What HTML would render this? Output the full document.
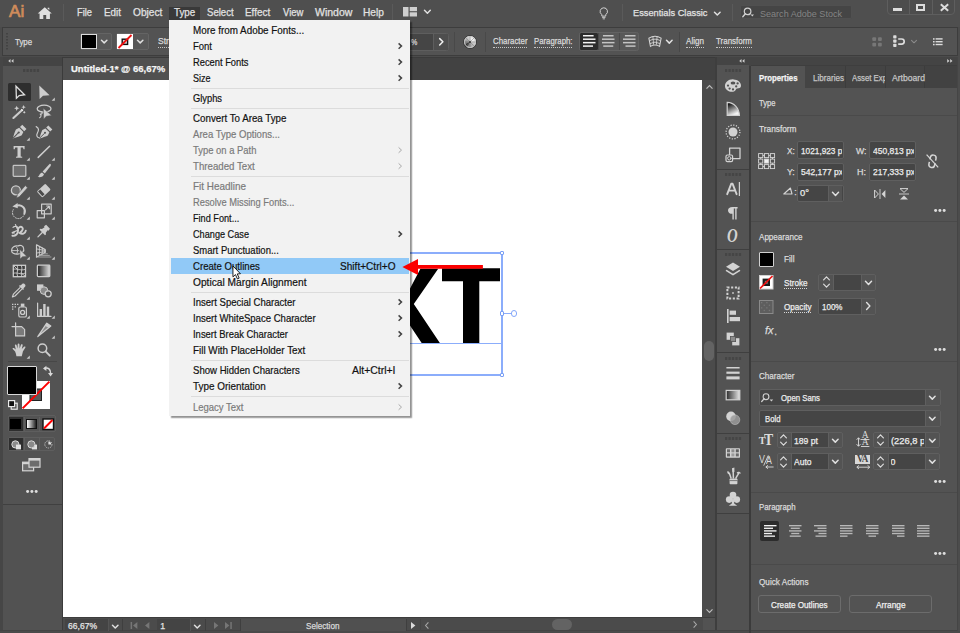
<!DOCTYPE html>
<html><head><meta charset="utf-8"><title>Adobe Illustrator</title>
<style>
html,body{margin:0;padding:0;}
body{width:960px;height:633px;overflow:hidden;background:#4f4f4f;position:relative;font-family:"Liberation Sans",sans-serif;}
.t{position:absolute;white-space:nowrap;transform-origin:0 50%;display:block;}
.r{position:absolute;display:block;}
svg{overflow:visible;}
</style></head>
<body>
<div class="r" style="left:0.00px;top:0.00px;width:960.00px;height:27.00px;background:#4f4f4f;"></div>
<div class="r" style="left:0.00px;top:27.00px;width:960.00px;height:30.00px;background:#4b4b4b;"></div>
<div class="r" style="left:2.30px;top:26.80px;width:955.60px;height:29.40px;background:#3d3d3d;"></div>
<div class="r" style="left:3.20px;top:27.80px;width:953.80px;height:27.40px;background:#535353;"></div>
<div class="r" style="left:0.00px;top:57.00px;width:63.00px;height:576.00px;background:#464646;"></div>
<div class="r" style="left:2.70px;top:57.00px;width:59.30px;height:9.00px;background:#444444;"></div>
<div class="r" style="left:2.70px;top:66.00px;width:59.30px;height:438.00px;background:#535353;"></div>
<div class="r" style="left:2.70px;top:504.00px;width:59.30px;height:129.00px;background:#525252;"></div>
<div class="r" style="left:62.00px;top:57.00px;width:1.00px;height:576.00px;background:#3b3b3b;"></div>
<div class="r" style="left:2.70px;top:503.50px;width:59.30px;height:1.00px;background:#404040;"></div>
<div class="r" style="left:63.00px;top:57.00px;width:653.50px;height:22.80px;background:#424242;"></div>
<div class="r" style="left:63.00px;top:57.00px;width:200.00px;height:22.80px;background:#505050;"></div>
<div class="r" style="left:63.00px;top:56.50px;width:653.50px;height:1.00px;background:#3b3b3b;"></div>
<div class="r" style="left:63.00px;top:79.80px;width:639.40px;height:537.50px;background:#ffffff;"></div>
<div class="r" style="left:702.40px;top:79.80px;width:12.50px;height:538.00px;background:#4b4b4b;"></div>
<div class="r" style="left:63.00px;top:617.20px;width:653.50px;height:15.50px;background:#4b4b4b;"></div>
<div class="r" style="left:63.00px;top:617.20px;width:653.50px;height:1.00px;background:#3d3d3d;"></div>
<div class="r" style="left:714.90px;top:57.00px;width:245.10px;height:576.00px;background:#3e3e3e;"></div>
<div class="r" style="left:716.50px;top:57.00px;width:243.50px;height:8.40px;background:#444444;"></div>
<div class="r" style="left:716.50px;top:65.40px;width:32.00px;height:448.60px;background:#535353;"></div>
<div class="r" style="left:716.50px;top:514.00px;width:32.00px;height:119.00px;background:#525252;"></div>
<div class="r" style="left:750.50px;top:66.00px;width:206.70px;height:567.00px;background:#535353;"></div>
<div class="r" style="left:0.00px;top:630.30px;width:960.00px;height:2.70px;background:#4a4a4a;"></div>
<div class="r" style="left:0.00px;top:630.30px;width:960.00px;height:0.80px;background:#434343;"></div>
<div class="r" style="left:957.20px;top:57.00px;width:1.00px;height:574.00px;background:#454545;"></div>
<div class="r" style="left:958.20px;top:28.00px;width:1.80px;height:603.00px;background:#4c4c4c;"></div>
<span class="t" style="left:9.40px;top:1.00px;height:22px;line-height:22px;font-size:17px;color:#d08c5b;font-family:'Liberation Sans', sans-serif;transform:scaleX(1.0050);-webkit-text-stroke:0.7px #d08c5b;">Ai</span>
<svg class="r" style="left:37.00px;top:5.60px;" width="15.5" height="14" viewBox="0 0 18 16"><path d="M9 1.2 L0.8 8.6 L3 8.6 L3 15 L7.3 15 L7.3 10.2 L10.7 10.2 L10.7 15 L15 15 L15 8.6 L17.2 8.6 Z M12.3 2 L14.3 2 L14.3 4.6 L12.3 2.9 Z" fill="#e0e0e0"/></svg>
<div class="r" style="left:62.50px;top:4.00px;width:1.00px;height:17.00px;background:#5a5a5a;"></div>
<div class="r" style="left:169.30px;top:7.00px;width:30.60px;height:12.70px;background:#393939;"></div>
<span class="t" style="left:76.70px;top:5.70px;height:13px;line-height:13px;font-size:10.3px;color:#e2e2e2;font-family:'Liberation Sans', sans-serif;transform:scaleX(0.9040);-webkit-text-stroke:0.25px #e2e2e2;">File</span>
<span class="t" style="left:103.80px;top:5.70px;height:13px;line-height:13px;font-size:10.3px;color:#e2e2e2;font-family:'Liberation Sans', sans-serif;transform:scaleX(0.9577);-webkit-text-stroke:0.25px #e2e2e2;">Edit</span>
<span class="t" style="left:132.70px;top:5.70px;height:13px;line-height:13px;font-size:10.3px;color:#e2e2e2;font-family:'Liberation Sans', sans-serif;transform:scaleX(0.9844);-webkit-text-stroke:0.25px #e2e2e2;">Object</span>
<span class="t" style="left:174.00px;top:5.70px;height:13px;line-height:13px;font-size:10.3px;color:#e2e2e2;font-family:'Liberation Sans', sans-serif;transform:scaleX(0.9495);-webkit-text-stroke:0.25px #e2e2e2;">Type</span>
<span class="t" style="left:206.60px;top:5.70px;height:13px;line-height:13px;font-size:10.3px;color:#e2e2e2;font-family:'Liberation Sans', sans-serif;transform:scaleX(0.9293);-webkit-text-stroke:0.25px #e2e2e2;">Select</span>
<span class="t" style="left:245.40px;top:5.70px;height:13px;line-height:13px;font-size:10.3px;color:#e2e2e2;font-family:'Liberation Sans', sans-serif;transform:scaleX(0.9640);-webkit-text-stroke:0.25px #e2e2e2;">Effect</span>
<span class="t" style="left:282.50px;top:5.70px;height:13px;line-height:13px;font-size:10.3px;color:#e2e2e2;font-family:'Liberation Sans', sans-serif;transform:scaleX(0.9169);-webkit-text-stroke:0.25px #e2e2e2;">View</span>
<span class="t" style="left:314.50px;top:5.70px;height:13px;line-height:13px;font-size:10.3px;color:#e2e2e2;font-family:'Liberation Sans', sans-serif;transform:scaleX(1.0212);-webkit-text-stroke:0.25px #e2e2e2;">Window</span>
<span class="t" style="left:362.70px;top:5.70px;height:13px;line-height:13px;font-size:10.3px;color:#e2e2e2;font-family:'Liberation Sans', sans-serif;transform:scaleX(0.9864);-webkit-text-stroke:0.25px #e2e2e2;">Help</span>
<div class="r" style="left:392.00px;top:4.00px;width:1.00px;height:17.00px;background:#5a5a5a;"></div>
<svg class="r" style="left:403.30px;top:6.80px;" width="14" height="9.4" viewBox="0 0 14 9.4"><rect x="0" y="0" width="5.5" height="9.5" fill="#cfcfcf"/><rect x="6.7" y="0" width="7.3" height="4.2" fill="#cfcfcf"/><rect x="6.7" y="5.3" width="7.3" height="4.2" fill="#cfcfcf"/></svg>
<svg class="r" style="left:424.20px;top:10.20px;" width="6.8" height="3.6" viewBox="0 0 6.8 3.6"><path d="M0.5 0.3 L3.4 3.2 L6.3 0.3" fill="none" stroke="#e0e0e0" stroke-width="1.5" stroke-linecap="round" stroke-linejoin="round"/></svg>
<svg class="r" style="left:599.20px;top:6.50px;" width="9.6" height="13.2" viewBox="0 0 12 16.5"><path d="M6 1 A4.6 4.6 0 0 1 8.6 9.4 L8.4 11.4 L3.6 11.4 L3.4 9.4 A4.6 4.6 0 0 1 6 1 Z" fill="none" stroke="#d8d8d8" stroke-width="1.2"/><path d="M3.9 13 L8.1 13 M4.6 14.8 L7.4 14.8" stroke="#d8d8d8" stroke-width="1.1"/></svg>
<div class="r" style="left:622.30px;top:4.00px;width:1.00px;height:17.00px;background:#5a5a5a;"></div>
<span class="t" style="left:632.50px;top:5.90px;height:13px;line-height:13px;font-size:9.7px;color:#e2e2e2;font-family:'Liberation Sans', sans-serif;transform:scaleX(0.9542);-webkit-text-stroke:0.25px #e2e2e2;">Essentials Classic</span>
<svg class="r" style="left:714.00px;top:12.20px;" width="6.6" height="3.4" viewBox="0 0 6.6 3.4"><path d="M0.5 0.3 L3.3 3.0 L6.1 0.3" fill="none" stroke="#e0e0e0" stroke-width="1.5" stroke-linecap="round" stroke-linejoin="round"/></svg>
<div class="r" style="left:731.50px;top:4.00px;width:1.00px;height:17.00px;background:#5a5a5a;"></div>
<div class="r" style="left:739.50px;top:4.50px;width:112.00px;height:14.00px;background:#454545;border:1px solid #505050;box-sizing:border-box;border-radius:2px;"></div>
<svg class="r" style="left:742.20px;top:7.40px;" width="13" height="11" viewBox="0 0 13 11"><circle cx="5.6" cy="4.4" r="3.3" fill="none" stroke="#d0d0d0" stroke-width="1.2"/><path d="M3.4 6.8 L0.8 9.8" stroke="#d0d0d0" stroke-width="1.4" stroke-linecap="round"/><path d="M8.6 7.6 L12 7.6 L10.3 9.6 Z" fill="#d0d0d0"/></svg>
<span class="t" style="left:760.30px;top:7.50px;height:12px;line-height:12px;font-size:9.4px;color:#848484;font-family:'Liberation Sans', sans-serif;transform:scaleX(0.9652);">Search Adobe Stock</span>
<div class="r" style="left:886.5px;top:-2px;width:68.5px;height:17px;border:1px solid #5e5e5e;border-radius:0 0 4px 4px;box-sizing:border-box;background:#4d4d4d"></div>
<div class="r" style="left:909.30px;top:0.00px;width:1.00px;height:14.00px;background:#5e5e5e;"></div>
<div class="r" style="left:931.50px;top:0.00px;width:1.00px;height:14.00px;background:#5e5e5e;"></div>
<div class="r" style="left:893.00px;top:7.80px;width:9.20px;height:3.00px;background:#dcdcdc;"></div>
<div class="r" style="left:916.00px;top:4.00px;width:9.00px;height:6.80px;border:2px solid #dcdcdc;box-sizing:border-box;border-top-width:2.4px;"></div>
<svg class="r" style="left:939.50px;top:3.80px;" width="9" height="7" viewBox="0 0 9 7"><path d="M0.8 0.3 L8.2 6.7 M8.2 0.3 L0.8 6.7" stroke="#dcdcdc" stroke-width="2"/></svg>
<svg class="r" style="left:5.50px;top:33.00px;" width="3" height="18" viewBox="0 0 3 18"><path d="M1 0 V18" stroke="#3e3e3e" stroke-width="1.4" stroke-dasharray="1.5 1.5"/></svg>
<span class="t" style="left:15.00px;top:37.10px;height:11px;line-height:11px;font-size:8.8px;color:#dadada;font-family:'Liberation Sans', sans-serif;transform:scaleX(0.9016);-webkit-text-stroke:0.25px #dadada;">Type</span>
<div class="r" style="left:79.70px;top:33.00px;width:32.00px;height:17.20px;background:#585858;border:1px solid #646464;box-sizing:border-box;border-radius:2px;"></div>
<div class="r" style="left:80.60px;top:33.90px;width:16.00px;height:15.50px;background:#000;border:1px solid #dcdcdc;box-sizing:border-box;"></div>
<svg class="r" style="left:101.00px;top:40.40px;" width="6.4" height="3.3" viewBox="0 0 6.4 3.3"><path d="M0.5 0.3 L3.2 2.9 L5.9 0.3" fill="none" stroke="#e0e0e0" stroke-width="1.5" stroke-linecap="round" stroke-linejoin="round"/></svg>
<div class="r" style="left:116.00px;top:33.00px;width:32.50px;height:17.20px;background:#585858;border:1px solid #646464;box-sizing:border-box;border-radius:2px;"></div>
<svg class="r" style="left:116.90px;top:33.90px;" width="16" height="15.5" viewBox="0 0 16 15.5"><rect x="0" y="0" width="16" height="15" fill="#fff"/><rect x="5.2" y="5.2" width="5.4" height="5.2" fill="#d8d8d8" stroke="#111" stroke-width="1.4"/><path d="M1.5 14 L14.5 1" stroke="#f01010" stroke-width="1.8"/></svg>
<svg class="r" style="left:137.00px;top:40.40px;" width="6.4" height="3.3" viewBox="0 0 6.4 3.3"><path d="M0.5 0.3 L3.2 2.9 L5.9 0.3" fill="none" stroke="#e0e0e0" stroke-width="1.5" stroke-linecap="round" stroke-linejoin="round"/></svg>
<span class="t" style="left:158.00px;top:36.20px;height:11px;line-height:11px;font-size:8.8px;color:#dadada;font-family:'Liberation Sans', sans-serif;transform:scaleX(0.9686);-webkit-text-stroke:0.25px #dadada;">Stroke:</span>
<div style="position:absolute;left:158.00px;top:46.60px;width:27.00px;height:0;border-top:1px dotted #dadada;opacity:.85"></div>
<div class="r" style="left:380.00px;top:33.00px;width:69.40px;height:17.60px;background:#454545;border:1px solid #5e5e5e;box-sizing:border-box;border-radius:2.5px;"></div>
<div class="r" style="left:434.20px;top:34.00px;width:14.20px;height:15.60px;background:#4e4e4e;"></div>
<div class="r" style="left:433.20px;top:34.00px;width:1.00px;height:15.60px;background:#5e5e5e;"></div>
<span class="t" style="left:410.60px;top:36.80px;height:11px;line-height:11px;font-size:8.8px;color:#dadada;font-family:'Liberation Sans', sans-serif;transform:scaleX(0.8048);-webkit-text-stroke:0.25px #dadada;">%</span>
<svg class="r" style="left:438.80px;top:38.20px;" width="4.6" height="7.6" viewBox="0 0 4.6 7.6"><path d="M0.7 0.6 L3.9 3.8 L0.7 7" fill="none" stroke="#f0f0f0" stroke-width="1.5" stroke-linecap="round" stroke-linejoin="round"/></svg>
<div class="r" style="left:454.20px;top:31.50px;width:1.00px;height:20.50px;background:#494949;"></div>
<div class="r" style="left:463px;top:34.5px;width:14px;height:14px;border-radius:50%;box-sizing:border-box;border:1px solid #3a3a3a;background:conic-gradient(from 0deg,#e0e0e0,#f6f6f6 50deg,#c8c8c8 110deg,#a4a4a4 170deg,#8c8c8c 200deg,#1c1c1c 228deg,#7c7c7c 256deg,#a8a8a8 300deg,#e0e0e0)"></div>
<div class="r" style="left:464px;top:35.5px;width:12px;height:12px;border-radius:50%;box-sizing:border-box;border:1.2px solid #cfcfcf"></div>
<svg class="r" style="left:463.00px;top:34.50px;" width="14" height="14" viewBox="0 0 14 14"><path d="M7 1.4 V12.6 M1.4 7 H12.6 M3 3 L11 11 M11 3 L3 11" stroke="#777" stroke-width="0.7" opacity=".7"/><circle cx="7" cy="7" r="1" fill="#333"/></svg>
<div class="r" style="left:485.00px;top:31.50px;width:1.00px;height:20.50px;background:#494949;"></div>
<span class="t" style="left:492.50px;top:36.20px;height:11px;line-height:11px;font-size:8.8px;color:#dadada;font-family:'Liberation Sans', sans-serif;transform:scaleX(0.8932);-webkit-text-stroke:0.25px #dadada;">Character</span>
<div style="position:absolute;left:492.50px;top:46.60px;width:34.50px;height:0;border-top:1px dotted #dadada;opacity:.85"></div>
<span class="t" style="left:533.70px;top:36.20px;height:11px;line-height:11px;font-size:8.8px;color:#dadada;font-family:'Liberation Sans', sans-serif;transform:scaleX(0.8844);-webkit-text-stroke:0.25px #dadada;">Paragraph:</span>
<div style="position:absolute;left:533.70px;top:46.60px;width:38.50px;height:0;border-top:1px dotted #dadada;opacity:.85"></div>
<div class="r" style="left:578.60px;top:31.80px;width:60.40px;height:19.40px;background:#585858;border:1px solid #626262;box-sizing:border-box;border-radius:2.5px;"></div>
<div class="r" style="left:579.60px;top:32.80px;width:18.30px;height:17.40px;background:#2c2c2c;border-radius:1.5px;"></div>
<div class="r" style="left:598.40px;top:32.80px;width:1.00px;height:17.40px;background:#4a4a4a;"></div>
<div class="r" style="left:618.60px;top:32.80px;width:1.00px;height:17.40px;background:#4a4a4a;"></div>
<svg class="r" style="left:582.50px;top:35.40px;" width="12.5" height="13.8" viewBox="0 0 12.5 13.8"><rect x="0.00" y="0.00" width="10.6" height="1.5" fill="#f4f4f4"/><rect x="0.00" y="3.45" width="12.5" height="1.5" fill="#f4f4f4"/><rect x="0.00" y="6.90" width="12.5" height="1.5" fill="#f4f4f4"/><rect x="0.00" y="10.35" width="10" height="1.5" fill="#f4f4f4"/></svg>
<svg class="r" style="left:602.40px;top:35.40px;" width="12.5" height="13.8" viewBox="0 0 12.5 13.8"><rect x="0.95" y="0.00" width="10.6" height="1.5" fill="#c4c4c4"/><rect x="0.00" y="3.45" width="12.5" height="1.5" fill="#c4c4c4"/><rect x="0.00" y="6.90" width="12.5" height="1.5" fill="#c4c4c4"/><rect x="1.25" y="10.35" width="10" height="1.5" fill="#c4c4c4"/></svg>
<svg class="r" style="left:622.70px;top:35.40px;" width="12.5" height="13.8" viewBox="0 0 12.5 13.8"><rect x="1.90" y="0.00" width="10.6" height="1.5" fill="#c4c4c4"/><rect x="0.00" y="3.45" width="12.5" height="1.5" fill="#c4c4c4"/><rect x="0.00" y="6.90" width="12.5" height="1.5" fill="#c4c4c4"/><rect x="2.50" y="10.35" width="10" height="1.5" fill="#c4c4c4"/></svg>
<svg class="r" style="left:647.50px;top:34.60px;" width="14" height="13" viewBox="0 0 16 14"><path d="M1 3.2 Q8 -1.4 15 3.2 L13.2 12.6 Q8 9.6 2.8 12.6 Z" fill="none" stroke="#d4d4d4" stroke-width="1.2"/><path d="M5.6 1.4 L6.4 10.6 M10.4 1.4 L9.6 10.6 M1.6 6.2 Q8 2.4 14.4 6.2 M2.2 9.4 Q8 6 13.8 9.4" fill="none" stroke="#d4d4d4" stroke-width="1"/></svg>
<svg class="r" style="left:666.40px;top:39.60px;" width="6.6" height="3.5" viewBox="0 0 6.6 3.5"><path d="M0.5 0.3 L3.3 3.1 L6.1 0.3" fill="none" stroke="#e0e0e0" stroke-width="1.5" stroke-linecap="round" stroke-linejoin="round"/></svg>
<div class="r" style="left:678.80px;top:32.00px;width:1.00px;height:20.00px;background:#474747;"></div>
<span class="t" style="left:685.80px;top:36.20px;height:11px;line-height:11px;font-size:8.8px;color:#dadada;font-family:'Liberation Sans', sans-serif;transform:scaleX(0.9201);-webkit-text-stroke:0.25px #dadada;">Align</span>
<div style="position:absolute;left:685.80px;top:46.60px;width:18.00px;height:0;border-top:1px dotted #dadada;opacity:.85"></div>
<span class="t" style="left:715.80px;top:36.20px;height:11px;line-height:11px;font-size:8.8px;color:#dadada;font-family:'Liberation Sans', sans-serif;transform:scaleX(0.9053);-webkit-text-stroke:0.25px #dadada;">Transform</span>
<div style="position:absolute;left:715.80px;top:46.60px;width:36.00px;height:0;border-top:1px dotted #dadada;opacity:.85"></div>
<svg class="r" style="left:872.00px;top:36.50px;" width="10.5" height="10" viewBox="0 0 10.5 10"><rect x="0.3" y="0.2" width="3.8" height="3.8" rx="1" fill="#777"/><rect x="0.3" y="5.8" width="3.8" height="3.8" rx="1" fill="#777"/><rect x="6" y="0.2" width="3.8" height="3.8" rx="1" fill="#777"/><rect x="6" y="5.8" width="3.8" height="3.8" rx="1" fill="#777"/></svg>
<svg class="r" style="left:893.00px;top:35.00px;" width="13" height="12.5" viewBox="0 0 13 12.5"><rect x="0.2" y="0.2" width="3.3" height="3.3" rx="0.8" fill="#dcdcdc"/><rect x="0.2" y="4.5" width="3.3" height="3.3" rx="0.8" fill="#dcdcdc"/><rect x="0.2" y="8.8" width="3.3" height="3.3" rx="0.8" fill="#dcdcdc"/><path d="M5.2 4 H8.6 A2.6 2.6 0 0 1 8.6 9.2 H5.2" fill="none" stroke="#dcdcdc" stroke-width="1.7"/></svg>
<svg class="r" style="left:911.00px;top:40.30px;" width="6" height="3.2" viewBox="0 0 6 3.2"><path d="M0.5 0.3 L3.0 2.8000000000000003 L5.5 0.3" fill="none" stroke="#8a8a8a" stroke-width="1.1" stroke-linecap="round" stroke-linejoin="round"/></svg>
<svg class="r" style="left:933.30px;top:38.00px;" width="10" height="8" viewBox="0 0 10 8"><rect x="0" y="0.2" width="1.6" height="1.5" fill="#dcdcdc"/><rect x="2.6" y="0.2" width="7" height="1.4" fill="#dcdcdc"/><rect x="0" y="3" width="1.6" height="1.5" fill="#dcdcdc"/><rect x="2.6" y="3" width="7" height="1.4" fill="#dcdcdc"/><rect x="0" y="5.8" width="1.6" height="1.5" fill="#dcdcdc"/><rect x="2.6" y="5.8" width="7" height="1.4" fill="#dcdcdc"/></svg>
<svg class="r" style="left:7.70px;top:58.80px;" width="5.7" height="4" viewBox="0 0 5.7 4"><path d="M2.5 0.1 L0.2 1.9 L2.5 3.7 Z M5.5 0.1 L3.2 1.9 L5.5 3.7 Z" fill="#d0d0d0"/></svg>
<svg class="r" style="left:23.30px;top:69.00px;" width="17.25" height="3" viewBox="0 0 17.25 3"><rect x="0.00" y="0" width="2.3" height="3" fill="#444444"/><rect x="3.45" y="0" width="2.3" height="3" fill="#444444"/><rect x="6.90" y="0" width="2.3" height="3" fill="#444444"/><rect x="10.35" y="0" width="2.3" height="3" fill="#444444"/><rect x="13.80" y="0" width="2.3" height="3" fill="#444444"/></svg>
<div class="r" style="left:8.00px;top:83.00px;width:22.50px;height:18.00px;background:#2e2e2e;border-radius:1.5px;"></div>
<svg class="r" style="left:9.00px;top:82.00px;" width="20" height="20" viewBox="0 0 20 20"><path d="M7 4.2 L7.4 16.2 L10.2 13.6 L15.6 12.7 Z" fill="none" stroke="#dedede" stroke-width="1.3" stroke-linejoin="miter"/></svg>
<svg class="r" style="left:34.30px;top:82.00px;" width="20" height="20" viewBox="0 0 20 20"><path d="M5.3 3.4 L5.6 17 L9 13.8 L15.6 13.2 Z" fill="#cdcdcd"/><path d="M20.8 15.6 L20.8 18.8 L17.6 18.8 Z" fill="#c8c8c8"/></svg>
<svg class="r" style="left:9.00px;top:101.85px;" width="20" height="20" viewBox="0 0 20 20"><path d="M4.4 16 L12.6 8.4" fill="none" stroke="#cdcdcd" stroke-linecap="round" stroke-linejoin="round" stroke-width="2.1" stroke-linecap="butt"/><path d="M12.6 8.4 L13.6 7.5" stroke="#f0f0f0" stroke-width="2.1"/><path d="M7.70 3.70 L8.47 5.53 L10.30 6.30 L8.47 7.07 L7.70 8.90 L6.93 7.07 L5.10 6.30 L6.93 5.53 Z" fill="#cdcdcd"/><path d="M14.60 3.00 L15.25 4.55 L16.80 5.20 L15.25 5.85 L14.60 7.40 L13.95 5.85 L12.40 5.20 L13.95 4.55 Z" fill="#cdcdcd"/><path d="M15.30 9.00 L15.94 9.66 L16.60 10.30 L15.94 10.94 L15.30 11.60 L14.66 10.94 L14.00 10.30 L14.66 9.66 Z" fill="#cdcdcd"/></svg>
<svg class="r" style="left:34.30px;top:101.85px;" width="20" height="20" viewBox="0 0 20 20"><ellipse cx="10.1" cy="6.7" rx="6.9" ry="3.5" fill="none" stroke="#cdcdcd" stroke-linecap="round" stroke-linejoin="round" stroke-width="1.3"/><path d="M6.6 9.6 a1.3 1.3 0 1 1 -0.4 2.4 c1.4 1 1 3 -0.6 3.8" fill="none" stroke="#cdcdcd" stroke-linecap="round" stroke-linejoin="round" stroke-width="1.1"/><path d="M9.3 6.2 L9.7 17.2 L12.3 14.2 L17.6 13.6 Z" fill="#cdcdcd" stroke="#535353" stroke-width="0.5"/></svg>
<svg class="r" style="left:9.00px;top:121.70px;" width="20" height="20" viewBox="0 0 20 20"><g transform="translate(3.8,16.4) scale(1.14) translate(-3.6,-16.2)"><path d="M3.6 16.2 Q5.2 10.6 6.35 8.35 L9.18 6.94 L12.86 10.62 L11.45 13.45 Q9.2 14.6 3.6 16.2 Z M9.9 6.2 L11.9 4.2 L15.6 7.9 L13.6 9.9 Z" fill="#cdcdcd"/><path d="M3.9 15.9 L8.4 11.4" stroke="#535353" stroke-width="0.9"/><circle cx="8.8" cy="11" r="0.95" fill="#535353"/></g><path d="M20.8 15.6 L20.8 18.8 L17.6 18.8 Z" fill="#c8c8c8"/></svg>
<svg class="r" style="left:34.30px;top:121.70px;" width="20" height="20" viewBox="0 0 20 20"><g transform="translate(5.4,16.4) scale(1.08) translate(-3.6,-16.2)"><path d="M3.6 16.2 Q5.2 10.6 6.35 8.35 L9.18 6.94 L12.86 10.62 L11.45 13.45 Q9.2 14.6 3.6 16.2 Z M9.9 6.2 L11.9 4.2 L15.6 7.9 L13.6 9.9 Z" fill="#cdcdcd"/><path d="M3.9 15.9 L8.4 11.4" stroke="#535353" stroke-width="0.9"/><circle cx="8.8" cy="11" r="0.95" fill="#535353"/></g><path d="M2.2 4.6 C5.2 6 4.8 8.6 3.4 11 C2.2 13.2 2.6 15.6 5.6 16" fill="none" stroke="#cdcdcd" stroke-linecap="round" stroke-linejoin="round" stroke-width="1.2"/></svg>
<svg class="r" style="left:9.00px;top:141.55px;" width="20" height="20" viewBox="0 0 20 20"><path d="M4.6 4.1 H15.6 V7.3 H14.5 L14 5.5 H11.7 V14.4 L13.2 14.7 V15.85 H7 V14.7 L8.5 14.4 V5.5 H6.2 L5.7 7.3 H4.6 Z" fill="#cdcdcd"/><path d="M20.8 15.6 L20.8 18.8 L17.6 18.8 Z" fill="#c8c8c8"/></svg>
<svg class="r" style="left:34.30px;top:141.55px;" width="20" height="20" viewBox="0 0 20 20"><path d="M4.2 15.4 L15.6 4.2" fill="none" stroke="#cdcdcd" stroke-linecap="round" stroke-linejoin="round" stroke-width="1.5"/><path d="M20.8 15.6 L20.8 18.8 L17.6 18.8 Z" fill="#c8c8c8"/></svg>
<svg class="r" style="left:9.00px;top:161.40px;" width="20" height="20" viewBox="0 0 20 20"><rect x="4.2" y="4.4" width="12.6" height="11" rx="0.8" fill="#6f6f6f" stroke="#c4c4c4" stroke-width="1.3"/><path d="M20.8 15.6 L20.8 18.8 L17.6 18.8 Z" fill="#c8c8c8"/></svg>
<svg class="r" style="left:34.30px;top:161.40px;" width="20" height="20" viewBox="0 0 20 20"><path d="M15.8 2.8 C17 3 17.2 4 16.6 5 L10.8 12.4 L8.6 10.6 Z" fill="#cdcdcd"/><path d="M8 11.4 L10 13.2 C9.4 15.4 7 16.6 3.6 16 C5.4 15 5.4 12.2 8 11.4 Z" fill="#cdcdcd"/><path d="M20.8 15.6 L20.8 18.8 L17.6 18.8 Z" fill="#c8c8c8"/></svg>
<svg class="r" style="left:9.00px;top:181.25px;" width="20" height="20" viewBox="0 0 20 20"><circle cx="6.9" cy="9.4" r="4.5" fill="#6f6f6f" stroke="#cdcdcd" stroke-width="1.3"/><path d="M16.3 4.6 L18.6 6.8 L10.6 15.6 L7.4 17.2 L8.4 13.4 Z" fill="#cdcdcd" stroke="#535353" stroke-width="0.7"/><path d="M20.8 15.6 L20.8 18.8 L17.6 18.8 Z" fill="#c8c8c8"/></svg>
<svg class="r" style="left:34.30px;top:181.25px;" width="20" height="20" viewBox="0 0 20 20"><g transform="translate(9.8,9.6) rotate(-43)"><rect x="-5.8" y="-4.1" width="11.6" height="8.2" rx="1.2" fill="#cdcdcd"/><rect x="-4.9" y="-3.2" width="3" height="6.4" fill="#4a4a4a"/></g><path d="M20.8 15.6 L20.8 18.8 L17.6 18.8 Z" fill="#c8c8c8"/></svg>
<svg class="r" style="left:9.00px;top:201.10px;" width="20" height="20" viewBox="0 0 20 20"><path d="M8.6 4.4 A6 6 0 0 1 15.4 12.6" fill="none" stroke="#cdcdcd" stroke-linecap="round" stroke-linejoin="round" stroke-width="2" stroke-linecap="butt"/><path d="M15.4 12.6 A6 6 0 1 1 4.4 8.4" fill="none" stroke="#cdcdcd" stroke-linecap="round" stroke-linejoin="round" stroke-width="1" stroke-dasharray="1.1 1.5"/><path d="M3.4 5.4 L8.6 2 L8.8 7.2 Z" fill="#cdcdcd"/><path d="M20.8 15.6 L20.8 18.8 L17.6 18.8 Z" fill="#c8c8c8"/></svg>
<svg class="r" style="left:34.30px;top:201.10px;" width="20" height="20" viewBox="0 0 20 20"><rect x="7.6" y="3.2" width="9.6" height="9.6" fill="none" stroke="#cdcdcd" stroke-linecap="round" stroke-linejoin="round" stroke-width="1.2"/><rect x="3.2" y="9.6" width="7.2" height="7.2" fill="none" stroke="#cdcdcd" stroke-linecap="round" stroke-linejoin="round" stroke-width="1.2"/><path d="M11.6 8.8 L15.2 5.2 M12.6 5 H15.4 V7.8" fill="none" stroke="#cdcdcd" stroke-linecap="round" stroke-linejoin="round" stroke-width="1.1"/><path d="M20.8 15.6 L20.8 18.8 L17.6 18.8 Z" fill="#c8c8c8"/></svg>
<svg class="r" style="left:9.00px;top:220.95px;" width="20" height="20" viewBox="0 0 20 20"><path d="M3.4 14.8 C6.4 15.4 9.4 12.4 9 9.4 C8.6 6.4 11.6 4.8 13.4 6.6 C15 8.4 12 11 10.6 12 C13 13.6 16.4 12.6 16.8 9.6" fill="none" stroke="#cdcdcd" stroke-linecap="round" stroke-linejoin="round" stroke-width="1.9"/><path d="M4 6.4 C6 4.4 8.6 5.4 9.4 7.4 M3.2 11.6 L9.4 9 M6.4 3.6 L8.4 8" fill="none" stroke="#cdcdcd" stroke-linecap="round" stroke-linejoin="round" stroke-width="1.2"/><path d="M2.6 12.8 L5.4 10 L5.8 12.6 Z" fill="#cdcdcd"/><path d="M20.8 15.6 L20.8 18.8 L17.6 18.8 Z" fill="#c8c8c8"/></svg>
<svg class="r" style="left:34.30px;top:220.95px;" width="20" height="20" viewBox="0 0 20 20"><g transform="translate(10.2,9.6) scale(0.8) translate(-10.4,-9.8)"><path d="M10.2 4.4 L12.8 2.6 L17.6 7.4 L15.8 10 L14.6 9.4 L12.4 12.6 L12.6 14.6 L11.4 15.6 L4.6 8.8 L5.6 7.6 L7.6 7.8 L10.8 5.6 Z" fill="#cdcdcd"/><path d="M8 12.2 L2.6 17.6" fill="none" stroke="#cdcdcd" stroke-linecap="round" stroke-linejoin="round" stroke-width="1.6"/></g><path d="M20.8 15.6 L20.8 18.8 L17.6 18.8 Z" fill="#c8c8c8"/></svg>
<svg class="r" style="left:9.00px;top:240.80px;" width="20" height="20" viewBox="0 0 20 20"><path d="M2.6 9.4 C2.6 6.2 6 4.4 9 5 C10.6 3.6 14.4 4.4 14.6 7.4 C15.6 10 13 13 8.6 13.2 C5 13.4 2.6 12 2.6 9.4 Z" fill="none" stroke="#cdcdcd" stroke-linecap="round" stroke-linejoin="round" stroke-width="1.2"/><path d="M3 9.6 H9.4 M7.6 6.2 C9 7.6 9 10.6 7.8 12.8" fill="none" stroke="#cdcdcd" stroke-linecap="round" stroke-linejoin="round" stroke-width="0.9"/><path d="M10.8 8.4 L11.1 18 L13.5 15.7 L17.8 15.4 Z" fill="#cdcdcd" stroke="#535353" stroke-width="0.5"/><path d="M20.8 15.6 L20.8 18.8 L17.6 18.8 Z" fill="#c8c8c8"/></svg>
<svg class="r" style="left:34.30px;top:240.80px;" width="20" height="20" viewBox="0 0 20 20"><path d="M2.5 3.8 L11.2 8.6 L11.2 11.4 L2.5 16.2 Z" fill="none" stroke="#cdcdcd" stroke-linecap="round" stroke-linejoin="round" stroke-width="1.2"/><path d="M5.4 5.4 V14.6 M8.3 7 V13 M2.5 7.9 L11.2 9.6 M2.5 12.1 L11.2 10.5" fill="none" stroke="#cdcdcd" stroke-linecap="round" stroke-linejoin="round" stroke-width="0.9"/><path d="M7 12.8 H13.8 M5.4 14.4 H15.8 M3.8 16 H17.4" stroke="#a8a8a8" stroke-width="0.9"/><path d="M20.8 15.6 L20.8 18.8 L17.6 18.8 Z" fill="#c8c8c8"/></svg>
<svg class="r" style="left:9.00px;top:260.65px;" width="20" height="20" viewBox="0 0 20 20"><rect x="4.3" y="4.3" width="12.2" height="11.4" fill="#3c3c3c" stroke="#cdcdcd" stroke-width="1.3"/><path d="M4.3 8.4 C8 6.8 11 10.4 16.5 8.2 M4.3 12.4 C8 10.6 11 14.4 16.5 12 M8.2 4.3 C10.2 8 6.6 12 8.6 15.7 M12.4 4.3 C14.4 8 10.8 12 12.8 15.7 M5 5 L9 9 M12 12 L16 15" fill="none" stroke="#cdcdcd" stroke-linecap="round" stroke-linejoin="round" stroke-width="0.9"/></svg>
<svg class="r" style="left:34.30px;top:260.65px;" width="20" height="20" viewBox="0 0 20 20"><defs><linearGradient id="gr1" x1="0" x2="1" y1="0" y2="0"><stop offset="0" stop-color="#222"/><stop offset="1" stop-color="#ddd"/></linearGradient></defs><rect x="3.4" y="4.2" width="12.4" height="11.4" rx="0.8" fill="url(#gr1)" stroke="#cdcdcd" stroke-width="1.3"/></svg>
<svg class="r" style="left:9.00px;top:280.50px;" width="20" height="20" viewBox="0 0 20 20"><path d="M13.4 2.8 C14.8 1.6 17.4 4 16.2 5.6 L14.4 7.4 L15 8 L14 9 L10 5 L11 4 L11.6 4.6 Z" fill="#cdcdcd"/><path d="M11 6.6 L4.4 13.2 L3.4 16 L6 15 L12.6 8.4" fill="none" stroke="#cdcdcd" stroke-linecap="round" stroke-linejoin="round" stroke-width="1.2"/><path d="M20.8 15.6 L20.8 18.8 L17.6 18.8 Z" fill="#c8c8c8"/></svg>
<svg class="r" style="left:34.30px;top:280.50px;" width="20" height="20" viewBox="0 0 20 20"><rect x="3" y="3.4" width="6.4" height="6.4" fill="#cdcdcd"/><circle cx="10" cy="9.6" r="3.8" fill="#8a8a8a" stroke="#cdcdcd" stroke-width="1"/><circle cx="14.2" cy="12.8" r="3" fill="#535353" stroke="#cdcdcd" stroke-width="1.3"/></svg>
<svg class="r" style="left:9.00px;top:300.35px;" width="20" height="20" viewBox="0 0 20 20"><rect x="9.8" y="7" width="7.6" height="10" rx="1.6" fill="none" stroke="#cdcdcd" stroke-linecap="round" stroke-linejoin="round" stroke-width="1.2"/><rect x="11.8" y="3.6" width="3.6" height="3.2" fill="#cdcdcd"/><circle cx="13.6" cy="12.4" r="2" fill="none" stroke="#cdcdcd" stroke-linecap="round" stroke-linejoin="round" stroke-width="1.3"/><path d="M3 4.4 h1.4 M5.6 4.4 h1.4 M8 4.4 h1.4 M3 6.8 h1.4 M5.6 6.8 h1.4 M3 9.2 h1.4" stroke="#cdcdcd" stroke-width="1.3"/><path d="M20.8 15.6 L20.8 18.8 L17.6 18.8 Z" fill="#c8c8c8"/></svg>
<svg class="r" style="left:34.30px;top:300.35px;" width="20" height="20" viewBox="0 0 20 20"><path d="M3.6 3 V16.4 H17" fill="none" stroke="#cdcdcd" stroke-linecap="round" stroke-linejoin="round" stroke-width="1.2"/><rect x="5.6" y="9" width="2.4" height="7" fill="#cdcdcd"/><rect x="9.2" y="4" width="2.4" height="12" fill="#cdcdcd"/><rect x="12.8" y="6.6" width="2.4" height="9.4" fill="#cdcdcd"/><path d="M20.8 15.6 L20.8 18.8 L17.6 18.8 Z" fill="#c8c8c8"/></svg>
<svg class="r" style="left:9.00px;top:320.20px;" width="20" height="20" viewBox="0 0 20 20"><path d="M6.6 2.8 V7 M3 6.6 H8.6" fill="none" stroke="#cdcdcd" stroke-linecap="round" stroke-linejoin="round" stroke-width="1.2"/><path d="M6.6 6.6 H12.6 L15.6 9.4 V15.8 H6.6 Z" fill="#7a7a7a" stroke="#cdcdcd" stroke-width="1.2"/></svg>
<svg class="r" style="left:34.30px;top:320.20px;" width="20" height="20" viewBox="0 0 20 20"><path d="M12.8 3.2 L16.8 6 L3.8 16.6 Z" fill="#8a8a8a" stroke="#cdcdcd" stroke-width="1.3" stroke-linejoin="round"/><path d="M12.8 3.2 L16.8 6 L14.8 8 L11 5.8 Z" fill="#cdcdcd"/><path d="M20.8 15.6 L20.8 18.8 L17.6 18.8 Z" fill="#c8c8c8"/></svg>
<svg class="r" style="left:9.00px;top:340.05px;" width="20" height="20" viewBox="0 0 20 20"><g transform="translate(10,10) scale(1.08,0.9) translate(-9.8,-9.6)"><path d="M6.2 11.4 L4 8.6 C3.4 7.6 4.6 6.8 5.4 7.6 L6.8 9 L6 4.6 C5.8 3.4 7.4 3.2 7.6 4.2 L8.4 8 L8.6 3.2 C8.6 2 10.2 2 10.2 3.2 L10.4 8 L11.6 3.8 C12 2.8 13.4 3.2 13.2 4.2 L12.4 8.6 L14.4 6 C15.2 5.2 16.2 6 15.6 7 L13.4 11.4 C13 14 12.6 15.4 12.4 16.6 H7.4 C7.2 15 6.8 13 6.2 11.4 Z" fill="#cdcdcd"/></g><path d="M20.8 15.6 L20.8 18.8 L17.6 18.8 Z" fill="#c8c8c8"/></svg>
<svg class="r" style="left:34.30px;top:340.05px;" width="20" height="20" viewBox="0 0 20 20"><circle cx="8.4" cy="8.2" r="4.3" fill="none" stroke="#cdcdcd" stroke-linecap="round" stroke-linejoin="round" stroke-width="1.5"/><path d="M11.6 11.4 L15.8 15.6" fill="none" stroke="#cdcdcd" stroke-linecap="round" stroke-linejoin="round" stroke-width="2"/></svg>
<div class="r" style="left:8.00px;top:361.00px;width:49.00px;height:1.00px;background:#474747;"></div>
<svg class="r" style="left:21.90px;top:381.30px;" width="28.6" height="28" viewBox="0 0 28.6 28"><rect x="0" y="0" width="28" height="28" fill="#fff"/><rect x="8" y="8" width="11.5" height="11.5" fill="#5a5a5a" stroke="#222" stroke-width="1"/><path d="M0.6 27.4 L27.4 0.6" stroke="#f00" stroke-width="2"/></svg>
<div class="r" style="left:7.40px;top:365.80px;width:29.80px;height:28.80px;background:#000;border:1px solid #d8d8d8;box-sizing:border-box;border-radius:1px;"></div>
<svg class="r" style="left:42.00px;top:365.00px;" width="12" height="12" viewBox="0 0 12 12"><path d="M2.4 3.4 C6 2 9 4.4 8.6 8.6" fill="none" stroke="#d8d8d8" stroke-width="1.5"/><path d="M1 3.4 L4.4 0.8 L4.4 6 Z M6 8 L11 8 L8.6 11.4 Z" fill="#d8d8d8"/></svg>
<svg class="r" style="left:7.50px;top:400.00px;" width="10" height="10" viewBox="0 0 10 10"><rect x="3.2" y="3.2" width="6" height="6" fill="none" stroke="#e8e8e8" stroke-width="1.2"/><rect x="0.6" y="0.6" width="6" height="6" fill="#111" stroke="#e8e8e8" stroke-width="1.2"/></svg>
<div class="r" style="left:7.50px;top:415.20px;width:48.00px;height:16.60px;border:1px solid #5e5e5e;box-sizing:border-box;border-radius:2px;"></div>
<div class="r" style="left:8.70px;top:416.50px;width:14.80px;height:14.00px;background:#2e2e2e;"></div>
<div class="r" style="left:23.50px;top:416.50px;width:1.00px;height:14.00px;background:#5e5e5e;"></div>
<div class="r" style="left:39.30px;top:416.50px;width:1.00px;height:14.00px;background:#5e5e5e;"></div>
<div class="r" style="left:10.00px;top:418.50px;width:10.50px;height:10.50px;background:#000;"></div>
<div class="r" style="left:26.40px;top:418.50px;width:10.50px;height:10.50px;background:linear-gradient(90deg,#fff,#222);border:1px solid #111;box-sizing:border-box;"></div>
<svg class="r" style="left:42.50px;top:418.50px;" width="10.5" height="10.5" viewBox="0 0 10.5 10.5"><rect x="0" y="0" width="10.5" height="10.5" fill="#fff" stroke="#111" stroke-width="1.4"/><path d="M1 9.5 L9.5 1" stroke="#f00" stroke-width="2"/></svg>
<div class="r" style="left:7.70px;top:436.80px;width:47.50px;height:14.60px;border:1px solid #5e5e5e;box-sizing:border-box;border-radius:2px;"></div>
<div class="r" style="left:8.70px;top:437.80px;width:14.80px;height:12.60px;background:#2e2e2e;"></div>
<div class="r" style="left:23.50px;top:437.80px;width:1.00px;height:12.60px;background:#5e5e5e;"></div>
<div class="r" style="left:39.30px;top:437.80px;width:1.00px;height:12.60px;background:#5e5e5e;"></div>
<svg class="r" style="left:11.00px;top:439.50px;" width="11" height="10" viewBox="0 0 11 10"><circle cx="4.4" cy="4.4" r="3.6" fill="#8a8a8a" stroke="#d8d8d8" stroke-width="1"/><rect x="5" y="4.6" width="5" height="4.8" fill="#e0e0e0"/></svg>
<svg class="r" style="left:27.00px;top:439.50px;" width="11" height="10" viewBox="0 0 11 10"><rect x="5" y="4.6" width="5" height="4.8" fill="#e0e0e0"/><circle cx="4.4" cy="4.4" r="3.6" fill="#8a8a8a" stroke="#d8d8d8" stroke-width="1"/></svg>
<svg class="r" style="left:43.50px;top:440.00px;" width="9" height="9" viewBox="0 0 9 9"><circle cx="4.4" cy="4.4" r="3.6" fill="none" stroke="#bdbdbd" stroke-width="1" stroke-dasharray="1.4 1"/><path d="M4.4 4.4 L4.4 1.6 A2.8 2.8 0 0 1 7.2 4.4 Z" fill="#e0e0e0"/></svg>
<svg class="r" style="left:22.00px;top:458.00px;" width="19" height="14" viewBox="0 0 19 14"><rect x="0.6" y="4.2" width="11" height="8.6" fill="#6c6c6c" stroke="#d4d4d4" stroke-width="1.2"/><rect x="0.6" y="4.2" width="11" height="2" fill="#d4d4d4"/><rect x="7" y="0.6" width="11" height="8.6" fill="#6c6c6c" stroke="#d4d4d4" stroke-width="1.2"/><rect x="7" y="0.6" width="11" height="2" fill="#d4d4d4"/></svg>
<svg class="r" style="left:26.00px;top:490.00px;" width="12" height="3.2" viewBox="0 0 12 3.2"><circle cx="1.6" cy="1.6" r="1.5" fill="#dedede"/><circle cx="5.9" cy="1.6" r="1.5" fill="#dedede"/><circle cx="10.2" cy="1.6" r="1.5" fill="#dedede"/></svg>
<span class="t" style="left:70.80px;top:62.70px;height:12px;line-height:12px;font-size:9.2px;color:#f4f4f4;font-family:'Liberation Sans', sans-serif;font-weight:700;transform:scaleX(1.0332);-webkit-text-stroke:0.25px #f4f4f4;">Untitled-1* @ 66,67%</span>
<svg class="r" style="left:705.70px;top:85.10px;" width="7" height="4" viewBox="0 0 7 4"><path d="M0.5 3.6 L3.5 0.6 L6.5 3.6" fill="none" stroke="#bdbdbd" stroke-width="1.2"/></svg>
<svg class="r" style="left:705.60px;top:608.50px;" width="7" height="4" viewBox="0 0 7 4"><path d="M0.5 0.4 L3.5 3.4 L6.5 0.4" fill="none" stroke="#bdbdbd" stroke-width="1.2"/></svg>
<div class="r" style="left:703.80px;top:340.60px;width:10.60px;height:20.20px;background:#636363;border-radius:5.3px;"></div>
<div class="r" style="left:702.60px;top:618.30px;width:12.20px;height:12.00px;background:#525252;"></div>
<div class="r" style="left:64.50px;top:618.50px;width:43.50px;height:12.00px;background:#444444;"></div>
<div class="r" style="left:108.00px;top:618.50px;width:1.00px;height:12.00px;background:#555;"></div>
<div class="r" style="left:121.50px;top:618.50px;width:1.00px;height:12.00px;background:#3f3f3f;"></div>
<span class="t" style="left:68.40px;top:620.80px;height:11px;line-height:11px;font-size:8.8px;color:#e4e4e4;font-family:'Liberation Sans', sans-serif;transform:scaleX(0.9717);-webkit-text-stroke:0.25px #e4e4e4;">66,67%</span>
<svg class="r" style="left:111.50px;top:624.50px;" width="6.5" height="3.4" viewBox="0 0 6.5 3.4"><path d="M0.5 0.3 L3.25 3.0 L6.0 0.3" fill="none" stroke="#e0e0e0" stroke-width="1.5" stroke-linecap="round" stroke-linejoin="round"/></svg>
<svg class="r" style="left:132.50px;top:621.50px;" width="5" height="7" viewBox="0 0 5 7"><path d="M4.4 0 L0 3.5 L4.4 7 Z" fill="#767676"/><rect x="-2.4" y="0" width="1.5" height="7" fill="#767676"/></svg>
<svg class="r" style="left:144.50px;top:621.50px;" width="5" height="7" viewBox="0 0 5 7"><path d="M4.4 0 L0 3.5 L4.4 7 Z" fill="#767676"/></svg>
<div class="r" style="left:157.00px;top:618.50px;width:33.00px;height:12.00px;background:#444444;"></div>
<div class="r" style="left:190.00px;top:618.50px;width:1.00px;height:12.00px;background:#555;"></div>
<div class="r" style="left:205.00px;top:618.50px;width:1.00px;height:12.00px;background:#3f3f3f;"></div>
<span class="t" style="left:160.20px;top:621.10px;height:11px;line-height:11px;font-size:8.8px;color:#e4e4e4;font-family:'Liberation Sans', sans-serif;-webkit-text-stroke:0.25px #e4e4e4;">1</span>
<svg class="r" style="left:193.50px;top:624.50px;" width="6.5" height="3.4" viewBox="0 0 6.5 3.4"><path d="M0.5 0.3 L3.25 3.0 L6.0 0.3" fill="none" stroke="#e0e0e0" stroke-width="1.5" stroke-linecap="round" stroke-linejoin="round"/></svg>
<svg class="r" style="left:213.50px;top:621.50px;" width="5" height="7" viewBox="0 0 5 7"><path d="M0 0 L4.4 3.5 L0 7 Z" fill="#767676"/></svg>
<svg class="r" style="left:225.00px;top:621.50px;" width="5" height="7" viewBox="0 0 5 7"><path d="M0 0 L4.4 3.5 L0 7 Z" fill="#767676"/><rect x="5.3" y="0" width="1.5" height="7" fill="#767676"/></svg>
<div class="r" style="left:240.00px;top:618.50px;width:166.00px;height:12.00px;background:#505050;"></div>
<div class="r" style="left:239.50px;top:618.50px;width:1.00px;height:12.00px;background:#3f3f3f;"></div>
<div class="r" style="left:406.00px;top:618.50px;width:1.00px;height:12.00px;background:#3f3f3f;"></div>
<span class="t" style="left:305.50px;top:620.90px;height:11px;line-height:11px;font-size:8.8px;color:#dadada;font-family:'Liberation Sans', sans-serif;transform:scaleX(0.9253);-webkit-text-stroke:0.25px #dadada;">Selection</span>
<svg class="r" style="left:410.50px;top:621.50px;" width="5" height="7" viewBox="0 0 5 7"><path d="M0 0 L4.4 3.5 L0 7 Z" fill="#dcdcdc"/></svg>
<svg class="r" style="left:424.50px;top:621.50px;" width="4" height="7" viewBox="0 0 4 7"><path d="M3.4 0.4 L0.6 3.5 L3.4 6.6" fill="none" stroke="#a8a8a8" stroke-width="1.1"/></svg>
<div class="r" style="left:420.00px;top:618.50px;width:1.00px;height:12.00px;background:#454545;"></div>
<div class="r" style="left:551.70px;top:618.70px;width:20.80px;height:11.30px;background:#636363;border-radius:5.6px;"></div>
<svg class="r" style="left:692.90px;top:621.40px;" width="4" height="7" viewBox="0 0 4 7"><path d="M0.6 0.4 L3.4 3.5 L0.6 6.6" fill="none" stroke="#a8a8a8" stroke-width="1.1"/></svg>
<svg class="r" style="left:738.50px;top:58.70px;" width="5.7" height="4" viewBox="0 0 5.7 4"><path d="M2.5 0.1 L0.2 1.9 L2.5 3.7 Z M5.5 0.1 L3.2 1.9 L5.5 3.7 Z" fill="#d0d0d0"/></svg>
<svg class="r" style="left:946.50px;top:58.70px;" width="5.7" height="4" viewBox="0 0 5.7 4"><path d="M0.2 0.1 L2.5 1.9 L0.2 3.7 Z M3.2 0.1 L5.5 1.9 L3.2 3.7 Z" fill="#d0d0d0"/></svg>
<div class="r" style="left:748.50px;top:57.00px;width:2.00px;height:576.00px;background:#3b3b3b;"></div>
<div class="r" style="left:748.50px;top:57.00px;width:2.00px;height:9.00px;background:#444444;"></div>
<svg class="r" style="left:725.30px;top:69.30px;" width="17.25" height="3" viewBox="0 0 17.25 3"><rect x="0.00" y="0" width="2.3" height="3" fill="#454545"/><rect x="3.45" y="0" width="2.3" height="3" fill="#454545"/><rect x="6.90" y="0" width="2.3" height="3" fill="#454545"/><rect x="10.35" y="0" width="2.3" height="3" fill="#454545"/><rect x="13.80" y="0" width="2.3" height="3" fill="#454545"/></svg>
<svg class="r" style="left:723.30px;top:75.80px;" width="20" height="20" viewBox="0 0 20 20"><path d="M10.6 3.4 C5.6 3 1.6 6.4 2 10.6 C2.4 14.6 7 16.6 11 15.6 C13 15 12.4 13.2 13.8 12.6 C15.4 12 18 12.4 18 9.4 C18 6 14.6 3.6 10.6 3.4 Z" fill="#d2d2d2"/><circle cx="5" cy="9.6" r="1.15" fill="#535353"/><circle cx="6.6" cy="12.6" r="1.15" fill="#535353"/><circle cx="10" cy="13.4" r="1.15" fill="#535353"/><circle cx="13.2" cy="10.4" r="1.15" fill="#535353"/><circle cx="14.6" cy="7.4" r="1.15" fill="#535353"/><ellipse cx="10" cy="7" rx="2.4" ry="1.5" fill="#535353"/></svg>
<svg class="r" style="left:723.30px;top:98.80px;" width="20" height="20" viewBox="0 0 20 20"><defs><linearGradient id="cg" x1="0.1" y1="0" x2="0.55" y2="1"><stop offset="0.1" stop-color="#111"/><stop offset="0.95" stop-color="#f4f4f4"/></linearGradient></defs><path d="M4.2 3.4 C11 3.6 16 9 16.4 16.4 L4.2 16.4 Z" fill="url(#cg)" stroke="#d2d2d2" stroke-width="1.2"/></svg>
<svg class="r" style="left:723.30px;top:121.80px;" width="20" height="20" viewBox="0 0 20 20"><circle cx="10" cy="10" r="4.5" fill="#d2d2d2"/><circle cx="10" cy="10" r="6.9" fill="none" stroke="#d2d2d2" stroke-width="1.3" stroke-dasharray="1.2 1.51"/></svg>
<svg class="r" style="left:723.30px;top:145.20px;" width="20" height="20" viewBox="0 0 20 20"><rect x="6.6" y="3.2" width="10.4" height="10.4" fill="none" stroke="#d2d2d2" stroke-linecap="round" stroke-linejoin="round" stroke-width="1.3"/><rect x="3" y="10" width="6.6" height="6.6" rx="1.4" fill="#535353" stroke="#d2d2d2" stroke-width="1.2"/><circle cx="6.3" cy="13.3" r="1.7" fill="none" stroke="#d2d2d2" stroke-linecap="round" stroke-linejoin="round" stroke-width="1"/></svg>
<div class="r" style="left:716.50px;top:168.50px;width:32.00px;height:1.00px;background:#3f3f3f;"></div>
<svg class="r" style="left:725.30px;top:173.00px;" width="17.25" height="3" viewBox="0 0 17.25 3"><rect x="0.00" y="0" width="2.3" height="3" fill="#454545"/><rect x="3.45" y="0" width="2.3" height="3" fill="#454545"/><rect x="6.90" y="0" width="2.3" height="3" fill="#454545"/><rect x="10.35" y="0" width="2.3" height="3" fill="#454545"/><rect x="13.80" y="0" width="2.3" height="3" fill="#454545"/></svg>
<svg class="r" style="left:723.30px;top:179.30px;" width="20" height="20" viewBox="0 0 20 20"><path d="M4.2 15.2 L8.2 4.8 L9.6 4.8 L13.6 15.2 M5.8 11.6 H12" fill="none" stroke="#d2d2d2" stroke-linecap="round" stroke-linejoin="round" stroke-width="1.9" stroke-linecap="butt" stroke-linejoin="miter"/><path d="M16.4 3 V17" stroke="#d2d2d2" stroke-width="1.2"/></svg>
<svg class="r" style="left:722.40px;top:202.90px;" width="20" height="20" viewBox="0 0 20 20"><path d="M10.6 4 H15.6 V5.4 H14.6 V16.6 H13.2 V5.4 H11.8 V16.6 H10.4 V10.8 C7.6 10.8 6 9.4 6 7.4 C6 5.4 7.6 4 10.6 4 Z" fill="#d2d2d2"/></svg>
<span class="t" style="left:726.6px;top:224.3px;font-family:'Liberation Serif',serif;font-style:italic;font-weight:700;font-size:18.5px;line-height:24px;color:#d2d2d2;transform:scaleX(.8)">O</span>
<div class="r" style="left:716.50px;top:248.50px;width:32.00px;height:1.00px;background:#3f3f3f;"></div>
<svg class="r" style="left:725.30px;top:253.00px;" width="17.25" height="3" viewBox="0 0 17.25 3"><rect x="0.00" y="0" width="2.3" height="3" fill="#454545"/><rect x="3.45" y="0" width="2.3" height="3" fill="#454545"/><rect x="6.90" y="0" width="2.3" height="3" fill="#454545"/><rect x="10.35" y="0" width="2.3" height="3" fill="#454545"/><rect x="13.80" y="0" width="2.3" height="3" fill="#454545"/></svg>
<svg class="r" style="left:723.30px;top:259.00px;" width="20" height="20" viewBox="0 0 20 20"><path d="M10 3.6 L17 7.8 L10 12 L3 7.8 Z" fill="#d2d2d2"/><path d="M3.6 11.6 L10 15.6 L16.4 11.6" fill="none" stroke="#d2d2d2" stroke-linecap="round" stroke-linejoin="round" stroke-width="1.7" stroke-linecap="butt"/></svg>
<svg class="r" style="left:723.30px;top:282.80px;" width="20" height="20" viewBox="0 0 20 20"><rect x="4.4" y="4.4" width="11.2" height="11.2" fill="none" stroke="#d2d2d2" stroke-width="2" stroke-dasharray="2.1 1.63"/><rect x="9.2" y="9.2" width="1.6" height="1.6" fill="#d2d2d2"/></svg>
<svg class="r" style="left:723.30px;top:306.40px;" width="20" height="20" viewBox="0 0 20 20"><rect x="4" y="3" width="1.6" height="14" fill="#d2d2d2"/><rect x="6.6" y="4.6" width="6.4" height="4.2" fill="#d2d2d2"/><rect x="6.6" y="11" width="10.4" height="4.2" fill="#d2d2d2"/></svg>
<svg class="r" style="left:723.30px;top:329.40px;" width="20" height="20" viewBox="0 0 20 20"><rect x="3.6" y="3.6" width="7.2" height="7.2" fill="#d2d2d2"/><rect x="9.2" y="9.2" width="7.2" height="7.2" fill="#d2d2d2"/><rect x="7.4" y="7.4" width="5.2" height="5.2" fill="#8a8a8a" stroke="#535353" stroke-width="0.8"/></svg>
<div class="r" style="left:716.50px;top:352.40px;width:32.00px;height:1.00px;background:#3f3f3f;"></div>
<svg class="r" style="left:725.30px;top:356.90px;" width="17.25" height="3" viewBox="0 0 17.25 3"><rect x="0.00" y="0" width="2.3" height="3" fill="#454545"/><rect x="3.45" y="0" width="2.3" height="3" fill="#454545"/><rect x="6.90" y="0" width="2.3" height="3" fill="#454545"/><rect x="10.35" y="0" width="2.3" height="3" fill="#454545"/><rect x="13.80" y="0" width="2.3" height="3" fill="#454545"/></svg>
<svg class="r" style="left:723.30px;top:362.60px;" width="20" height="20" viewBox="0 0 20 20"><rect x="3.4" y="4" width="13.2" height="1.5" fill="#d2d2d2"/><rect x="3.4" y="8.6" width="13.2" height="2.2" fill="#d2d2d2"/><rect x="3.4" y="13.4" width="13.2" height="3" fill="#d2d2d2"/></svg>
<svg class="r" style="left:723.30px;top:385.20px;" width="20" height="20" viewBox="0 0 20 20"><defs><linearGradient id="gr2" x1="0" x2="1" y1="0" y2="0"><stop offset="0" stop-color="#2a2a2a"/><stop offset="1" stop-color="#e6e6e6"/></linearGradient></defs><rect x="3.2" y="5.4" width="13.6" height="9.4" fill="url(#gr2)" stroke="#d2d2d2" stroke-width="1.2"/></svg>
<svg class="r" style="left:723.30px;top:408.40px;" width="20" height="20" viewBox="0 0 20 20"><circle cx="8" cy="8.4" r="4.8" fill="#d2d2d2"/><circle cx="12" cy="11.8" r="4.8" fill="#9a9a9a" fill-opacity=".85" stroke="#bdbdbd" stroke-width="0.6"/></svg>
<div class="r" style="left:716.50px;top:432.50px;width:32.00px;height:1.00px;background:#3f3f3f;"></div>
<svg class="r" style="left:725.30px;top:437.00px;" width="17.25" height="3" viewBox="0 0 17.25 3"><rect x="0.00" y="0" width="2.3" height="3" fill="#454545"/><rect x="3.45" y="0" width="2.3" height="3" fill="#454545"/><rect x="6.90" y="0" width="2.3" height="3" fill="#454545"/><rect x="10.35" y="0" width="2.3" height="3" fill="#454545"/><rect x="13.80" y="0" width="2.3" height="3" fill="#454545"/></svg>
<svg class="r" style="left:723.30px;top:443.00px;" width="20" height="20" viewBox="0 0 20 20"><rect x="2.8" y="5.2" width="14.2" height="9.6" rx="0.8" fill="#d2d2d2"/><rect x="4.0" y="6.3" width="3" height="3" fill="#6a6a6a"/><rect x="8.4" y="6.3" width="3" height="3" fill="#8c8c8c"/><rect x="12.8" y="6.3" width="3" height="3" fill="#5e5e5e"/><rect x="4.0" y="10.4" width="3" height="3" fill="#5e5e5e"/><rect x="8.4" y="10.4" width="3" height="3" fill="#9a9a9a"/><rect x="12.8" y="10.4" width="3" height="3" fill="#6a6a6a"/></svg>
<svg class="r" style="left:723.30px;top:465.80px;" width="20" height="20" viewBox="0 0 20 20"><rect x="6.6" y="12.4" width="7.8" height="5.8" rx="0.8" fill="#d2d2d2"/><path d="M6.6 14.6 H14.4" stroke="#535353" stroke-width="0.7"/><path d="M8.2 12.6 L6.4 7.6 M10.4 12.6 L10.2 6 M12.6 12.6 L15 8.4" stroke="#d2d2d2" stroke-width="1.5"/><path d="M4.2 5.4 C5.4 4.6 7.2 6.4 7.2 8.4 C5.6 8.6 4 7.4 4.2 5.4 Z M9 2.2 L11.4 1.6 L11.4 6 L9.2 6 Z M13.6 6.4 C15 5 17.4 5.6 18 7.4 L16.4 7.6 L15.6 9.2 Z" fill="#d2d2d2"/></svg>
<svg class="r" style="left:723.30px;top:489.00px;" width="20" height="20" viewBox="0 0 20 20"><circle cx="10" cy="6" r="3.3" fill="#d2d2d2"/><circle cx="6.2" cy="10.6" r="3.3" fill="#d2d2d2"/><circle cx="13.8" cy="10.6" r="3.3" fill="#d2d2d2"/><path d="M9.2 9 H10.8 L11.2 14.6 L14.2 16.8 H5.8 L8.8 14.6 Z" fill="#d2d2d2"/></svg>
<div class="r" style="left:716.50px;top:513.00px;width:32.00px;height:1.00px;background:#3f3f3f;"></div>
<div class="r" style="left:750.50px;top:66.00px;width:206.70px;height:21.80px;background:#424242;"></div>
<div class="r" style="left:750.50px;top:66.00px;width:54.60px;height:22.50px;background:#535353;"></div>
<div class="r" style="left:805.10px;top:66.00px;width:119.50px;height:21.80px;background:#444444;"></div>
<div class="r" style="left:845.00px;top:66.00px;width:1.00px;height:21.80px;background:#3c3c3c;"></div>
<div class="r" style="left:884.80px;top:66.00px;width:1.00px;height:21.80px;background:#3c3c3c;"></div>
<div class="r" style="left:924.30px;top:66.00px;width:1.00px;height:21.80px;background:#3c3c3c;"></div>
<span class="t" style="left:758.50px;top:72.80px;height:11px;line-height:11px;font-size:8.8px;color:#f4f4f4;font-family:'Liberation Sans', sans-serif;font-weight:700;transform:scaleX(0.8847);-webkit-text-stroke:0.25px #f4f4f4;">Properties</span>
<span class="t" style="left:812.80px;top:72.80px;height:11px;line-height:11px;font-size:8.8px;color:#c4c4c4;font-family:'Liberation Sans', sans-serif;transform:scaleX(0.9185);-webkit-text-stroke:0.25px #c4c4c4;">Libraries</span>
<div style="position:absolute;left:852.30px;top:72.80px;width:32.50px;height:11px;overflow:hidden"><span class="t" style="left:0;top:0;height:11px;line-height:11px;font-size:8.8px;color:#c4c4c4;font-family:'Liberation Sans', sans-serif;transform:scaleX(0.8836);-webkit-text-stroke:0.25px #c4c4c4;">Asset Exp</span></div>
<span class="t" style="left:891.80px;top:72.80px;height:11px;line-height:11px;font-size:8.8px;color:#c4c4c4;font-family:'Liberation Sans', sans-serif;transform:scaleX(0.9778);-webkit-text-stroke:0.25px #c4c4c4;">Artboard</span>
<span class="t" style="left:758.50px;top:97.50px;height:11px;line-height:11px;font-size:8.8px;color:#dadada;font-family:'Liberation Sans', sans-serif;transform:scaleX(0.8649);-webkit-text-stroke:0.25px #dadada;">Type</span>
<div class="r" style="left:750.50px;top:115.30px;width:206.70px;height:1.00px;background:#4a4a4a;"></div>
<span class="t" style="left:758.50px;top:123.80px;height:11px;line-height:11px;font-size:8.8px;color:#dadada;font-family:'Liberation Sans', sans-serif;transform:scaleX(0.9430);-webkit-text-stroke:0.25px #dadada;">Transform</span>
<svg class="r" style="left:758.00px;top:152.60px;" width="17.2" height="16.2" viewBox="0 0 17.2 16.2"><rect x="0.6" y="0.6" width="4.2" height="4" fill="none" stroke="#d6d6d6" stroke-width="0.9"/><rect x="6.5" y="0.6" width="4.2" height="4" fill="none" stroke="#d6d6d6" stroke-width="0.9"/><rect x="12.4" y="0.6" width="4.2" height="4" fill="none" stroke="#d6d6d6" stroke-width="0.9"/><rect x="0.6" y="6.1" width="4.2" height="4" fill="none" stroke="#d6d6d6" stroke-width="0.9"/><rect x="6.5" y="6.1" width="4.2" height="4" fill="#f2f2f2" stroke="#d6d6d6" stroke-width="0.9"/><rect x="12.4" y="6.1" width="4.2" height="4" fill="none" stroke="#d6d6d6" stroke-width="0.9"/><rect x="0.6" y="11.6" width="4.2" height="4" fill="none" stroke="#d6d6d6" stroke-width="0.9"/><rect x="6.5" y="11.6" width="4.2" height="4" fill="none" stroke="#d6d6d6" stroke-width="0.9"/><rect x="12.4" y="11.6" width="4.2" height="4" fill="none" stroke="#d6d6d6" stroke-width="0.9"/><path d="M4.8 2.6 H6.5 M10.7 2.6 H12.4 M4.8 13.6 H6.5 M10.7 13.6 H12.4 M2.7 4.6 V6.1 M2.7 10.1 V11.6 M14.5 4.6 V6.1 M14.5 10.1 V11.6" stroke="#d6d6d6" stroke-width="0.9"/></svg>
<span class="t" style="left:786.60px;top:145.80px;height:11px;line-height:11px;font-size:8.8px;color:#dadada;font-family:'Liberation Sans', sans-serif;transform:scaleX(0.9383);-webkit-text-stroke:0.25px #dadada;">X:</span>
<span class="t" style="left:786.60px;top:167.40px;height:11px;line-height:11px;font-size:8.8px;color:#dadada;font-family:'Liberation Sans', sans-serif;transform:scaleX(0.9964);-webkit-text-stroke:0.25px #dadada;">Y:</span>
<div class="r" style="left:797.00px;top:141.00px;width:47.00px;height:18.00px;background:#454545;border:1px solid #5f5f5f;box-sizing:border-box;border-radius:2px;"></div>
<div class="r" style="left:797.00px;top:163.00px;width:47.00px;height:17.50px;background:#454545;border:1px solid #5f5f5f;box-sizing:border-box;border-radius:2px;"></div>
<div style="position:absolute;left:801.30px;top:145.50px;width:41.00px;height:11px;overflow:hidden"><span class="t" style="left:0;top:0;height:11px;line-height:11px;font-size:8.8px;color:#ececec;font-family:'Liberation Sans', sans-serif;transform:scaleX(0.9394);-webkit-text-stroke:0.25px #ececec;">1021,923 px</span></div>
<div style="position:absolute;left:801.30px;top:167.10px;width:41.00px;height:11px;overflow:hidden"><span class="t" style="left:0;top:0;height:11px;line-height:11px;font-size:8.8px;color:#ececec;font-family:'Liberation Sans', sans-serif;transform:scaleX(0.9645);-webkit-text-stroke:0.25px #ececec;">542,177 px</span></div>
<span class="t" style="left:855.50px;top:145.80px;height:11px;line-height:11px;font-size:8.8px;color:#dadada;font-family:'Liberation Sans', sans-serif;transform:scaleX(0.9912);-webkit-text-stroke:0.25px #dadada;">W:</span>
<span class="t" style="left:857.00px;top:167.40px;height:11px;line-height:11px;font-size:8.8px;color:#dadada;font-family:'Liberation Sans', sans-serif;transform:scaleX(1.0213);-webkit-text-stroke:0.25px #dadada;">H:</span>
<div class="r" style="left:869.00px;top:141.00px;width:47.00px;height:18.00px;background:#454545;border:1px solid #5f5f5f;box-sizing:border-box;border-radius:2px;"></div>
<div class="r" style="left:869.00px;top:163.00px;width:47.00px;height:17.50px;background:#454545;border:1px solid #5f5f5f;box-sizing:border-box;border-radius:2px;"></div>
<div style="position:absolute;left:872.50px;top:145.50px;width:41.50px;height:11px;overflow:hidden"><span class="t" style="left:0;top:0;height:11px;line-height:11px;font-size:8.8px;color:#ececec;font-family:'Liberation Sans', sans-serif;transform:scaleX(0.9645);-webkit-text-stroke:0.25px #ececec;">450,813 px</span></div>
<div style="position:absolute;left:872.50px;top:167.10px;width:41.50px;height:11px;overflow:hidden"><span class="t" style="left:0;top:0;height:11px;line-height:11px;font-size:8.8px;color:#ececec;font-family:'Liberation Sans', sans-serif;transform:scaleX(0.9645);-webkit-text-stroke:0.25px #ececec;">217,333 px</span></div>
<svg class="r" style="left:926.00px;top:153.00px;" width="13" height="17" viewBox="0 0 13 17"><g transform="rotate(12 6.5 8.2)"><path d="M3.6 7 V4.9 A2.9 2.9 0 0 1 9.4 4.9 V7 M3.6 9.6 V11.7 A2.9 2.9 0 0 0 9.4 11.7 V9.6" fill="none" stroke="#d6d6d6" stroke-width="1.5"/></g><path d="M0.6 1.6 L12.2 14.4" stroke="#d6d6d6" stroke-width="1.2"/></svg>
<svg class="r" style="left:783.00px;top:187.00px;" width="10" height="8" viewBox="0 0 10 8"><path d="M0.8 7 L7.4 1 L9 7 Z" fill="none" stroke="#d4d4d4" stroke-width="1.1" stroke-linejoin="round"/></svg>
<span class="t" style="left:794.30px;top:187.10px;height:11px;line-height:11px;font-size:8.8px;color:#dadada;font-family:'Liberation Sans', sans-serif;-webkit-text-stroke:0.25px #dadada;">:</span>
<div class="r" style="left:797.00px;top:184.50px;width:46.50px;height:17.00px;background:#454545;border:1px solid #5f5f5f;box-sizing:border-box;border-radius:2px;"></div>
<div class="r" style="left:827.80px;top:185.50px;width:1.00px;height:15.00px;background:#5f5f5f;"></div>
<div class="r" style="left:828.80px;top:185.50px;width:13.70px;height:15.00px;background:#535353;"></div>
<span class="t" style="left:800.20px;top:188.30px;height:11px;line-height:11px;font-size:8.8px;color:#ececec;font-family:'Liberation Sans', sans-serif;transform:scaleX(1.0686);-webkit-text-stroke:0.25px #ececec;">0°</span>
<svg class="r" style="left:832.30px;top:191.50px;" width="7" height="3.8" viewBox="0 0 7 3.8"><path d="M0.5 0.3 L3.5 3.4 L6.5 0.3" fill="none" stroke="#e0e0e0" stroke-width="1.5" stroke-linecap="round" stroke-linejoin="round"/></svg>
<svg class="r" style="left:873.50px;top:188.50px;" width="12" height="10" viewBox="0 0 12 10"><path d="M0.6 1 L4.4 5 L0.6 9 Z" fill="none" stroke="#d4d4d4" stroke-width="1"/><path d="M11.4 1 L7.6 5 L11.4 9 Z" fill="#d4d4d4"/><path d="M6 0 V10" stroke="#d4d4d4" stroke-width="0.9"/></svg>
<svg class="r" style="left:898.50px;top:187.50px;" width="10" height="12" viewBox="0 0 10 12"><path d="M1 0.6 L5 4.4 L9 0.6 Z" fill="none" stroke="#d4d4d4" stroke-width="1"/><path d="M1 11.4 L5 7.6 L9 11.4 Z" fill="#d4d4d4"/><path d="M0 6 H10" stroke="#d4d4d4" stroke-width="0.9"/></svg>
<svg class="r" style="left:934.20px;top:209.40px;" width="12" height="3.2" viewBox="0 0 12 3.2"><circle cx="1.6" cy="1.6" r="1.5" fill="#dedede"/><circle cx="5.9" cy="1.6" r="1.5" fill="#dedede"/><circle cx="10.2" cy="1.6" r="1.5" fill="#dedede"/></svg>
<div class="r" style="left:750.50px;top:221.30px;width:206.70px;height:1.00px;background:#4a4a4a;"></div>
<span class="t" style="left:758.50px;top:231.90px;height:11px;line-height:11px;font-size:8.8px;color:#dadada;font-family:'Liberation Sans', sans-serif;transform:scaleX(0.9167);-webkit-text-stroke:0.25px #dadada;">Appearance</span>
<div class="r" style="left:759.00px;top:251.50px;width:14.50px;height:15.00px;background:#000;border:1px solid #d0d0d0;box-sizing:border-box;border-radius:1px;"></div>
<span class="t" style="left:783.70px;top:254.10px;height:11px;line-height:11px;font-size:8.8px;color:#dadada;font-family:'Liberation Sans', sans-serif;transform:scaleX(0.9333);-webkit-text-stroke:0.25px #dadada;">Fill</span>
<svg class="r" style="left:759.00px;top:275.00px;" width="14.5" height="14.5" viewBox="0 0 14.5 14.5"><rect x="0.5" y="0.5" width="13.5" height="13.5" fill="#fff" stroke="#d0d0d0"/><rect x="3.6" y="3.6" width="7.4" height="7.4" fill="#1c1c1c"/><rect x="5.8" y="5.8" width="3" height="3" fill="#777"/><path d="M1 13.5 L13.5 1" stroke="#f01010" stroke-width="1.6"/></svg>
<span class="t" style="left:783.70px;top:277.90px;height:11px;line-height:11px;font-size:8.8px;color:#ececec;font-family:'Liberation Sans', sans-serif;transform:scaleX(0.9238);-webkit-text-stroke:0.25px #ececec;">Stroke</span>
<div style="position:absolute;left:783.70px;top:288.30px;width:23.50px;height:0;border-top:1px dotted #ececec;opacity:.85"></div>
<div class="r" style="left:818.00px;top:273.50px;width:58.00px;height:17.50px;background:#535353;border:1px solid #5f5f5f;box-sizing:border-box;border-radius:2px;"></div>
<div class="r" style="left:833.50px;top:274.50px;width:27.50px;height:15.50px;background:#454545;"></div>
<div class="r" style="left:833.00px;top:274.50px;width:1.00px;height:15.50px;background:#5f5f5f;"></div>
<div class="r" style="left:860.50px;top:274.50px;width:1.00px;height:15.50px;background:#5f5f5f;"></div>
<svg class="r" style="left:822.50px;top:276.20px;" width="7" height="12" viewBox="0 0 7 12"><path d="M0.6 3.8 L3.5 0.8 L6.4 3.8 M0.6 8.2 L3.5 11.2 L6.4 8.2" fill="none" stroke="#dcdcdc" stroke-width="1.2" stroke-linecap="round" stroke-linejoin="round"/></svg>
<svg class="r" style="left:864.50px;top:280.50px;" width="7" height="3.8" viewBox="0 0 7 3.8"><path d="M0.5 0.3 L3.5 3.4 L6.5 0.3" fill="none" stroke="#e0e0e0" stroke-width="1.5" stroke-linecap="round" stroke-linejoin="round"/></svg>
<svg class="r" style="left:759.00px;top:299.50px;" width="14.5" height="14" viewBox="0 0 14.5 14"><rect x="0.5" y="0.5" width="13.5" height="13" fill="#5e5e5e" stroke="#8a8a8a"/><rect x="2.0" y="2.0" width="1.3" height="1.3" fill="#777"/><rect x="2.0" y="7.2" width="1.3" height="1.3" fill="#777"/><rect x="4.6" y="4.6" width="1.3" height="1.3" fill="#777"/><rect x="4.6" y="9.8" width="1.3" height="1.3" fill="#777"/><rect x="7.2" y="2.0" width="1.3" height="1.3" fill="#777"/><rect x="7.2" y="7.2" width="1.3" height="1.3" fill="#777"/><rect x="9.8" y="4.6" width="1.3" height="1.3" fill="#777"/><rect x="9.8" y="9.8" width="1.3" height="1.3" fill="#777"/></svg>
<span class="t" style="left:783.70px;top:301.90px;height:11px;line-height:11px;font-size:8.8px;color:#ececec;font-family:'Liberation Sans', sans-serif;transform:scaleX(0.9219);-webkit-text-stroke:0.25px #ececec;">Opacity</span>
<div style="position:absolute;left:783.70px;top:312.30px;width:27.50px;height:0;border-top:1px dotted #ececec;opacity:.85"></div>
<div class="r" style="left:818.00px;top:297.50px;width:58.00px;height:17.50px;background:#454545;border:1px solid #5f5f5f;box-sizing:border-box;border-radius:2px;"></div>
<div class="r" style="left:860.50px;top:298.50px;width:1.00px;height:15.50px;background:#5f5f5f;"></div>
<div class="r" style="left:861.50px;top:298.50px;width:13.50px;height:15.50px;background:#535353;"></div>
<span class="t" style="left:821.80px;top:302.10px;height:11px;line-height:11px;font-size:8.8px;color:#ececec;font-family:'Liberation Sans', sans-serif;transform:scaleX(0.9111);-webkit-text-stroke:0.25px #ececec;">100%</span>
<svg class="r" style="left:866.00px;top:302.40px;" width="4.5" height="8" viewBox="0 0 4.5 8"><path d="M0.6 0.6 L3.9 4 L0.6 7.4" fill="none" stroke="#e0e0e0" stroke-width="1.4" stroke-linecap="round" stroke-linejoin="round"/></svg>
<span class="t" style="left:764.80px;top:323.40px;height:14px;line-height:14px;font-size:11px;color:#dcdcdc;font-family:'Liberation Sans', sans-serif;font-style:italic;transform:scaleX(0.9810);-webkit-text-stroke:0.25px #dcdcdc;">fx</span>
<span class="t" style="left:774.20px;top:324.50px;height:13px;line-height:13px;font-size:10px;color:#dcdcdc;font-family:'Liberation Sans', sans-serif;-webkit-text-stroke:0.25px #dcdcdc;">.</span>
<svg class="r" style="left:934.20px;top:348.00px;" width="12" height="3.2" viewBox="0 0 12 3.2"><circle cx="1.6" cy="1.6" r="1.5" fill="#dedede"/><circle cx="5.9" cy="1.6" r="1.5" fill="#dedede"/><circle cx="10.2" cy="1.6" r="1.5" fill="#dedede"/></svg>
<div class="r" style="left:750.50px;top:360.80px;width:206.70px;height:1.00px;background:#4a4a4a;"></div>
<span class="t" style="left:758.50px;top:370.80px;height:11px;line-height:11px;font-size:8.8px;color:#dadada;font-family:'Liberation Sans', sans-serif;transform:scaleX(0.9191);-webkit-text-stroke:0.25px #dadada;">Character</span>
<div class="r" style="left:759.00px;top:388.50px;width:181.50px;height:17.20px;background:#454545;border:1px solid #5f5f5f;box-sizing:border-box;border-radius:2px;"></div>
<div class="r" style="left:925.00px;top:389.50px;width:1.00px;height:15.20px;background:#5f5f5f;"></div>
<div class="r" style="left:926.00px;top:389.50px;width:13.50px;height:15.20px;background:#535353;"></div>
<svg class="r" style="left:760.60px;top:393.00px;" width="13" height="10" viewBox="0 0 13 10"><circle cx="5" cy="3.7" r="2.9" fill="none" stroke="#d0d0d0" stroke-width="1.1"/><path d="M3 5.8 L0.7 8.5" stroke="#d0d0d0" stroke-width="1.3" stroke-linecap="round"/><path d="M8.6 6.6 L12.2 6.6 L10.4 8.6 Z" fill="#d0d0d0"/></svg>
<span class="t" style="left:781.30px;top:392.90px;height:11px;line-height:11px;font-size:8.8px;color:#ececec;font-family:'Liberation Sans', sans-serif;transform:scaleX(0.8860);-webkit-text-stroke:0.25px #ececec;">Open Sans</span>
<svg class="r" style="left:928.70px;top:395.60px;" width="6.6" height="3.5" viewBox="0 0 6.6 3.5"><path d="M0.5 0.3 L3.3 3.1 L6.1 0.3" fill="none" stroke="#e0e0e0" stroke-width="1.5" stroke-linecap="round" stroke-linejoin="round"/></svg>
<div class="r" style="left:759.00px;top:410.20px;width:181.50px;height:17.00px;background:#454545;border:1px solid #5f5f5f;box-sizing:border-box;border-radius:2px;"></div>
<div class="r" style="left:925.00px;top:411.20px;width:1.00px;height:15.00px;background:#5f5f5f;"></div>
<div class="r" style="left:926.00px;top:411.20px;width:13.50px;height:15.00px;background:#535353;"></div>
<span class="t" style="left:764.80px;top:414.40px;height:11px;line-height:11px;font-size:8.8px;color:#ececec;font-family:'Liberation Sans', sans-serif;transform:scaleX(0.8802);-webkit-text-stroke:0.25px #ececec;">Bold</span>
<svg class="r" style="left:928.70px;top:417.20px;" width="6.6" height="3.5" viewBox="0 0 6.6 3.5"><path d="M0.5 0.3 L3.3 3.1 L6.1 0.3" fill="none" stroke="#e0e0e0" stroke-width="1.5" stroke-linecap="round" stroke-linejoin="round"/></svg>
<div class="r" style="left:776.70px;top:431.70px;width:66.80px;height:16.80px;background:#535353;border:1px solid #5f5f5f;box-sizing:border-box;border-radius:2px;"></div>
<div class="r" style="left:791.70px;top:432.70px;width:36.50px;height:14.80px;background:#454545;"></div>
<div class="r" style="left:791.20px;top:432.70px;width:1.00px;height:14.80px;background:#5f5f5f;"></div>
<div class="r" style="left:828.20px;top:432.70px;width:1.00px;height:14.80px;background:#5f5f5f;"></div>
<svg class="r" style="left:780.30px;top:434.10px;" width="7" height="12" viewBox="0 0 7 12"><path d="M0.6 3.8 L3.5 0.8 L6.4 3.8 M0.6 8.2 L3.5 11.2 L6.4 8.2" fill="none" stroke="#dcdcdc" stroke-width="1.2" stroke-linecap="round" stroke-linejoin="round"/></svg>
<div style="position:absolute;left:794.20px;top:435.50px;width:33.50px;height:11px;overflow:hidden"><span class="t" style="left:0;top:0;height:11px;line-height:11px;font-size:8.8px;color:#ececec;font-family:'Liberation Sans', sans-serif;transform:scaleX(0.9808);-webkit-text-stroke:0.25px #ececec;">189 pt</span></div>
<svg class="r" style="left:832.20px;top:438.60px;" width="6.6" height="3.5" viewBox="0 0 6.6 3.5"><path d="M0.5 0.3 L3.3 3.1 L6.1 0.3" fill="none" stroke="#e0e0e0" stroke-width="1.5" stroke-linecap="round" stroke-linejoin="round"/></svg>
<span class="t" style="left:758.8px;top:434px;font-family:'Liberation Serif',serif;font-weight:700;font-size:10.5px;line-height:14px;color:#dcdcdc">T</span><span class="t" style="left:764.2px;top:430.6px;font-family:'Liberation Serif',serif;font-weight:700;font-size:16px;line-height:18px;color:#dcdcdc;transform:scaleX(.86)">T</span>
<div class="r" style="left:873.00px;top:431.70px;width:66.80px;height:16.80px;background:#535353;border:1px solid #5f5f5f;box-sizing:border-box;border-radius:2px;"></div>
<div class="r" style="left:888.00px;top:432.70px;width:36.50px;height:14.80px;background:#454545;"></div>
<div class="r" style="left:887.50px;top:432.70px;width:1.00px;height:14.80px;background:#5f5f5f;"></div>
<div class="r" style="left:924.50px;top:432.70px;width:1.00px;height:14.80px;background:#5f5f5f;"></div>
<svg class="r" style="left:876.60px;top:434.10px;" width="7" height="12" viewBox="0 0 7 12"><path d="M0.6 3.8 L3.5 0.8 L6.4 3.8 M0.6 8.2 L3.5 11.2 L6.4 8.2" fill="none" stroke="#dcdcdc" stroke-width="1.2" stroke-linecap="round" stroke-linejoin="round"/></svg>
<div style="position:absolute;left:890.50px;top:435.50px;width:33.50px;height:11px;overflow:hidden"><span class="t" style="left:0;top:0;height:11px;line-height:11px;font-size:8.8px;color:#ececec;font-family:'Liberation Sans', sans-serif;transform:scaleX(1.0622);-webkit-text-stroke:0.25px #ececec;">(226,8 pt)</span></div>
<svg class="r" style="left:928.50px;top:438.60px;" width="6.6" height="3.5" viewBox="0 0 6.6 3.5"><path d="M0.5 0.3 L3.3 3.1 L6.1 0.3" fill="none" stroke="#e0e0e0" stroke-width="1.5" stroke-linecap="round" stroke-linejoin="round"/></svg>
<span class="t" style="left:861.8px;top:429.6px;font-family:'Liberation Serif',serif;font-size:9.5px;line-height:11px;color:#dcdcdc">A</span><span class="t" style="left:861.8px;top:437.4px;font-family:'Liberation Serif',serif;font-size:9.5px;line-height:11px;color:#dcdcdc">A</span><svg class="r" style="left:856.20px;top:436.60px" width="5" height="10" viewBox="0 0 5 10"><path d="M2.5 1 V9 M0.6 2.8 L2.5 0.7 L4.4 2.8 M0.6 7.2 L2.5 9.3 L4.4 7.2" fill="none" stroke="#dcdcdc" stroke-width="0.9"/></svg><svg class="r" style="left:861.30px;top:438.50px" width="8.4" height="1" viewBox="0 0 8.4 1"><rect x="0" y="0" width="8.4" height="0.9" fill="#dcdcdc"/></svg><svg class="r" style="left:861.30px;top:446.30px" width="8.4" height="1" viewBox="0 0 8.4 1"><rect x="0" y="0" width="8.4" height="0.9" fill="#dcdcdc"/></svg>
<div class="r" style="left:776.70px;top:453.20px;width:66.80px;height:16.80px;background:#535353;border:1px solid #5f5f5f;box-sizing:border-box;border-radius:2px;"></div>
<div class="r" style="left:791.70px;top:454.20px;width:36.50px;height:14.80px;background:#454545;"></div>
<div class="r" style="left:791.20px;top:454.20px;width:1.00px;height:14.80px;background:#5f5f5f;"></div>
<div class="r" style="left:828.20px;top:454.20px;width:1.00px;height:14.80px;background:#5f5f5f;"></div>
<svg class="r" style="left:780.30px;top:455.60px;" width="7" height="12" viewBox="0 0 7 12"><path d="M0.6 3.8 L3.5 0.8 L6.4 3.8 M0.6 8.2 L3.5 11.2 L6.4 8.2" fill="none" stroke="#dcdcdc" stroke-width="1.2" stroke-linecap="round" stroke-linejoin="round"/></svg>
<div style="position:absolute;left:794.20px;top:457.00px;width:33.50px;height:11px;overflow:hidden"><span class="t" style="left:0;top:0;height:11px;line-height:11px;font-size:8.8px;color:#ececec;font-family:'Liberation Sans', sans-serif;transform:scaleX(0.9664);-webkit-text-stroke:0.25px #ececec;">Auto</span></div>
<svg class="r" style="left:832.20px;top:460.10px;" width="6.6" height="3.5" viewBox="0 0 6.6 3.5"><path d="M0.5 0.3 L3.3 3.1 L6.1 0.3" fill="none" stroke="#e0e0e0" stroke-width="1.5" stroke-linecap="round" stroke-linejoin="round"/></svg>
<span class="t" style="left:758.6px;top:453.2px;font-size:10px;line-height:14px;color:#dcdcdc;transform:scaleX(.88)">V</span><span class="t" style="left:765.6px;top:454.2px;font-size:10px;line-height:14px;color:#dcdcdc;transform:scaleX(.88)">A</span><svg class="r" style="left:762.00px;top:455.00px" width="8" height="11" viewBox="0 0 8 11"><path d="M6.3 0.4 L1.7 10.6" stroke="#dcdcdc" stroke-width="0.9"/></svg><svg class="r" style="left:765.00px;top:465.00px" width="9" height="4" viewBox="0 0 9 4"><path d="M8.6 2 H1 M3 0.3 L0.8 2 L3 3.7" fill="none" stroke="#dcdcdc" stroke-width="0.9"/></svg>
<div class="r" style="left:873.00px;top:453.20px;width:66.80px;height:16.80px;background:#535353;border:1px solid #5f5f5f;box-sizing:border-box;border-radius:2px;"></div>
<div class="r" style="left:888.00px;top:454.20px;width:36.50px;height:14.80px;background:#454545;"></div>
<div class="r" style="left:887.50px;top:454.20px;width:1.00px;height:14.80px;background:#5f5f5f;"></div>
<div class="r" style="left:924.50px;top:454.20px;width:1.00px;height:14.80px;background:#5f5f5f;"></div>
<svg class="r" style="left:876.60px;top:455.60px;" width="7" height="12" viewBox="0 0 7 12"><path d="M0.6 3.8 L3.5 0.8 L6.4 3.8 M0.6 8.2 L3.5 11.2 L6.4 8.2" fill="none" stroke="#dcdcdc" stroke-width="1.2" stroke-linecap="round" stroke-linejoin="round"/></svg>
<div style="position:absolute;left:890.50px;top:457.00px;width:33.50px;height:11px;overflow:hidden"><span class="t" style="left:0;top:0;height:11px;line-height:11px;font-size:8.8px;color:#ececec;font-family:'Liberation Sans', sans-serif;-webkit-text-stroke:0.25px #ececec;">0</span></div>
<svg class="r" style="left:928.50px;top:460.10px;" width="6.6" height="3.5" viewBox="0 0 6.6 3.5"><path d="M0.5 0.3 L3.3 3.1 L6.1 0.3" fill="none" stroke="#e0e0e0" stroke-width="1.5" stroke-linecap="round" stroke-linejoin="round"/></svg>
<svg class="r" style="left:855.40px;top:454.60px" width="15" height="9" viewBox="0 0 15 9"><rect x="0" y="0" width="15" height="9" fill="#d8d8d8"/></svg><span class="t" style="left:856.6px;top:452.6px;font-family:'Liberation Serif',serif;font-weight:700;font-size:9.5px;line-height:13px;color:#444;letter-spacing:-0.6px;transform:scaleX(.95)">VA</span><svg class="r" style="left:855.60px;top:464.60px" width="14.6" height="4.5" viewBox="0 0 14.6 4.5"><path d="M1 2.2 H13.6 M3 0.4 L0.8 2.2 L3 4 M11.6 0.4 L13.8 2.2 L11.6 4" fill="none" stroke="#dcdcdc" stroke-width="0.9"/></svg>
<svg class="r" style="left:934.20px;top:480.00px;" width="12" height="3.2" viewBox="0 0 12 3.2"><circle cx="1.6" cy="1.6" r="1.5" fill="#dedede"/><circle cx="5.9" cy="1.6" r="1.5" fill="#dedede"/><circle cx="10.2" cy="1.6" r="1.5" fill="#dedede"/></svg>
<div class="r" style="left:750.50px;top:492.30px;width:206.70px;height:1.00px;background:#4a4a4a;"></div>
<span class="t" style="left:758.50px;top:501.50px;height:11px;line-height:11px;font-size:8.8px;color:#dadada;font-family:'Liberation Sans', sans-serif;transform:scaleX(0.8882);-webkit-text-stroke:0.25px #dadada;">Paragraph</span>
<div class="r" style="left:759.60px;top:521.20px;width:19.60px;height:19.40px;background:#2c2c2c;border-radius:2px;"></div>
<svg class="r" style="left:763.85px;top:525.10px;" width="12.5" height="13.100000000000001" viewBox="0 0 12.5 13.100000000000001"><rect x="0.00" y="0.00" width="12.5" height="1.35" fill="#f2f2f2"/><rect x="0.00" y="2.62" width="9" height="1.35" fill="#f2f2f2"/><rect x="0.00" y="5.24" width="12.5" height="1.35" fill="#f2f2f2"/><rect x="0.00" y="7.86" width="8" height="1.35" fill="#f2f2f2"/><rect x="0.00" y="10.48" width="11" height="1.35" fill="#f2f2f2"/></svg>
<svg class="r" style="left:789.25px;top:525.10px;" width="12.5" height="13.100000000000001" viewBox="0 0 12.5 13.100000000000001"><rect x="0.00" y="0.00" width="12.5" height="1.35" fill="#b8b8b8"/><rect x="1.75" y="2.62" width="9" height="1.35" fill="#b8b8b8"/><rect x="0.00" y="5.24" width="12.5" height="1.35" fill="#b8b8b8"/><rect x="2.25" y="7.86" width="8" height="1.35" fill="#b8b8b8"/><rect x="0.75" y="10.48" width="11" height="1.35" fill="#b8b8b8"/></svg>
<svg class="r" style="left:813.95px;top:525.10px;" width="12.5" height="13.100000000000001" viewBox="0 0 12.5 13.100000000000001"><rect x="0.00" y="0.00" width="12.5" height="1.35" fill="#b8b8b8"/><rect x="3.50" y="2.62" width="9" height="1.35" fill="#b8b8b8"/><rect x="0.00" y="5.24" width="12.5" height="1.35" fill="#b8b8b8"/><rect x="4.50" y="7.86" width="8" height="1.35" fill="#b8b8b8"/><rect x="1.50" y="10.48" width="11" height="1.35" fill="#b8b8b8"/></svg>
<svg class="r" style="left:840.05px;top:525.10px;" width="12.5" height="13.100000000000001" viewBox="0 0 12.5 13.100000000000001"><rect x="0.00" y="0.00" width="12.5" height="1.35" fill="#b8b8b8"/><rect x="0.00" y="2.62" width="12.5" height="1.35" fill="#b8b8b8"/><rect x="0.00" y="5.24" width="12.5" height="1.35" fill="#b8b8b8"/><rect x="0.00" y="7.86" width="12.5" height="1.35" fill="#b8b8b8"/><rect x="0.00" y="10.48" width="7.5" height="1.35" fill="#b8b8b8"/></svg>
<svg class="r" style="left:865.95px;top:525.10px;" width="12.5" height="13.100000000000001" viewBox="0 0 12.5 13.100000000000001"><rect x="0.00" y="0.00" width="12.5" height="1.35" fill="#b8b8b8"/><rect x="0.00" y="2.62" width="12.5" height="1.35" fill="#b8b8b8"/><rect x="0.00" y="5.24" width="12.5" height="1.35" fill="#b8b8b8"/><rect x="0.00" y="7.86" width="12.5" height="1.35" fill="#b8b8b8"/><rect x="2.50" y="10.48" width="7.5" height="1.35" fill="#b8b8b8"/></svg>
<svg class="r" style="left:891.55px;top:525.10px;" width="12.5" height="13.100000000000001" viewBox="0 0 12.5 13.100000000000001"><rect x="0.00" y="0.00" width="12.5" height="1.35" fill="#b8b8b8"/><rect x="0.00" y="2.62" width="12.5" height="1.35" fill="#b8b8b8"/><rect x="0.00" y="5.24" width="12.5" height="1.35" fill="#b8b8b8"/><rect x="0.00" y="7.86" width="12.5" height="1.35" fill="#b8b8b8"/><rect x="5.00" y="10.48" width="7.5" height="1.35" fill="#b8b8b8"/></svg>
<svg class="r" style="left:916.95px;top:525.10px;" width="12.5" height="13.100000000000001" viewBox="0 0 12.5 13.100000000000001"><rect x="0.00" y="0.00" width="12.5" height="1.35" fill="#b8b8b8"/><rect x="0.00" y="2.62" width="12.5" height="1.35" fill="#b8b8b8"/><rect x="0.00" y="5.24" width="12.5" height="1.35" fill="#b8b8b8"/><rect x="0.00" y="7.86" width="12.5" height="1.35" fill="#b8b8b8"/><rect x="0.00" y="10.48" width="12.5" height="1.35" fill="#b8b8b8"/></svg>
<svg class="r" style="left:934.20px;top:551.60px;" width="12" height="3.2" viewBox="0 0 12 3.2"><circle cx="1.6" cy="1.6" r="1.5" fill="#dedede"/><circle cx="5.9" cy="1.6" r="1.5" fill="#dedede"/><circle cx="10.2" cy="1.6" r="1.5" fill="#dedede"/></svg>
<div class="r" style="left:750.50px;top:564.30px;width:206.70px;height:1.00px;background:#4a4a4a;"></div>
<span class="t" style="left:758.50px;top:577.40px;height:11px;line-height:11px;font-size:8.8px;color:#dadada;font-family:'Liberation Sans', sans-serif;transform:scaleX(0.9288);-webkit-text-stroke:0.25px #dadada;">Quick Actions</span>
<div class="r" style="left:758.20px;top:595.00px;width:83.30px;height:18.00px;background:#535353;border:1.3px solid #6c6c6c;box-sizing:border-box;border-radius:3px;"></div>
<div class="r" style="left:849.20px;top:595.00px;width:83.30px;height:18.00px;background:#535353;border:1.3px solid #6c6c6c;box-sizing:border-box;border-radius:3px;"></div>
<span class="t" style="left:771.40px;top:599.60px;height:11px;line-height:11px;font-size:8.8px;color:#f0f0f0;font-family:'Liberation Sans', sans-serif;transform:scaleX(0.9260);-webkit-text-stroke:0.25px #f0f0f0;">Create Outlines</span>
<span class="t" style="left:876.30px;top:599.60px;height:11px;line-height:11px;font-size:8.8px;color:#f0f0f0;font-family:'Liberation Sans', sans-serif;transform:scaleX(0.9426);-webkit-text-stroke:0.25px #f0f0f0;">Arrange</span>
<svg class="r" style="left:400.00px;top:260.00px;" width="110" height="90" viewBox="0 0 110 90"><path d="M20.4 8.7 L38.2 8.7 L13.8 44 L40.2 83.5 L22 83.5 L0 50.5 L0 47.8 Z" fill="#000"/><path d="M42 8.2 H100 V21.3 H79.3 V83.5 H63 V21.3 H42 Z" fill="#000"/></svg>
<div class="r" style="left:400.00px;top:252.00px;width:102.80px;height:1.80px;background:#8badfb;"></div>
<div class="r" style="left:400.00px;top:342.50px;width:102.80px;height:1.80px;background:#8badfb;"></div>
<div class="r" style="left:400.00px;top:374.30px;width:102.80px;height:1.80px;background:#8badfb;"></div>
<div class="r" style="left:501.30px;top:252.00px;width:1.80px;height:124.10px;background:#8badfb;"></div>
<div class="r" style="left:499.90px;top:250.60px;width:4.60px;height:4.60px;background:#fff;border:1.3px solid #7a9ff5;box-sizing:border-box;border-radius:1px;"></div>
<div class="r" style="left:499.90px;top:311.20px;width:4.60px;height:4.60px;background:#fff;border:1.3px solid #7a9ff5;box-sizing:border-box;border-radius:1px;"></div>
<div class="r" style="left:499.90px;top:372.90px;width:4.60px;height:4.60px;background:#fff;border:1.3px solid #7a9ff5;box-sizing:border-box;border-radius:1px;"></div>
<div class="r" style="left:504.00px;top:312.70px;width:7.50px;height:1.60px;background:#8badfb;"></div>
<div class="r" style="left:510.60px;top:310.30px;width:6.50px;height:6.50px;background:#fff;border:1.4px solid #84a7fa;box-sizing:border-box;border-radius:4px;"></div>
<div class="r" style="left:168.8px;top:19.7px;width:241px;height:396.3px;background:#f2f2f2;box-shadow:2px 2px 1.2px rgba(0,0,0,.42);"></div>
<div class="r" style="left:170.50px;top:258.00px;width:238.00px;height:15.50px;background:#91c9f7;"></div>
<span class="t" style="left:193.00px;top:23.40px;height:14px;line-height:14px;font-size:11px;color:#111111;font-family:'Liberation Sans', sans-serif;transform:scaleX(0.8959);-webkit-text-stroke:0.2px #111111;">More from Adobe Fonts...</span>
<span class="t" style="left:193.00px;top:39.40px;height:14px;line-height:14px;font-size:11px;color:#111111;font-family:'Liberation Sans', sans-serif;transform:scaleX(0.8630);-webkit-text-stroke:0.2px #111111;">Font</span>
<svg class="r" style="left:398.20px;top:42.90px;" width="4.2" height="6.2" viewBox="0 0 4.2 6.2"><path d="M0.6 0.4 L3.5 3.1 L0.6 5.8" fill="none" stroke="#444444" stroke-width="1.5"/></svg>
<span class="t" style="left:193.00px;top:55.40px;height:14px;line-height:14px;font-size:11px;color:#111111;font-family:'Liberation Sans', sans-serif;transform:scaleX(0.8483);-webkit-text-stroke:0.2px #111111;">Recent Fonts</span>
<svg class="r" style="left:398.20px;top:58.90px;" width="4.2" height="6.2" viewBox="0 0 4.2 6.2"><path d="M0.6 0.4 L3.5 3.1 L0.6 5.8" fill="none" stroke="#444444" stroke-width="1.5"/></svg>
<span class="t" style="left:193.00px;top:71.40px;height:14px;line-height:14px;font-size:11px;color:#111111;font-family:'Liberation Sans', sans-serif;transform:scaleX(0.8175);-webkit-text-stroke:0.2px #111111;">Size</span>
<svg class="r" style="left:398.20px;top:74.90px;" width="4.2" height="6.2" viewBox="0 0 4.2 6.2"><path d="M0.6 0.4 L3.5 3.1 L0.6 5.8" fill="none" stroke="#444444" stroke-width="1.5"/></svg>
<div class="r" style="left:190.50px;top:87.50px;width:218.00px;height:1.00px;background:#dcdcdc;"></div>
<span class="t" style="left:193.00px;top:91.40px;height:14px;line-height:14px;font-size:11px;color:#111111;font-family:'Liberation Sans', sans-serif;transform:scaleX(0.8467);-webkit-text-stroke:0.2px #111111;">Glyphs</span>
<div class="r" style="left:190.50px;top:107.50px;width:218.00px;height:1.00px;background:#dcdcdc;"></div>
<span class="t" style="left:193.00px;top:111.40px;height:14px;line-height:14px;font-size:11px;color:#111111;font-family:'Liberation Sans', sans-serif;transform:scaleX(0.8862);-webkit-text-stroke:0.2px #111111;">Convert To Area Type</span>
<span class="t" style="left:193.00px;top:127.40px;height:14px;line-height:14px;font-size:11px;color:#7a7a7a;font-family:'Liberation Sans', sans-serif;transform:scaleX(0.8693);-webkit-text-stroke:0.2px #7a7a7a;">Area Type Options...</span>
<span class="t" style="left:193.00px;top:143.40px;height:14px;line-height:14px;font-size:11px;color:#7a7a7a;font-family:'Liberation Sans', sans-serif;transform:scaleX(0.8568);-webkit-text-stroke:0.2px #7a7a7a;">Type on a Path</span>
<svg class="r" style="left:398.20px;top:146.90px;" width="4.2" height="6.2" viewBox="0 0 4.2 6.2"><path d="M0.6 0.4 L3.5 3.1 L0.6 5.8" fill="none" stroke="#a8a8a8" stroke-width="1.0"/></svg>
<span class="t" style="left:193.00px;top:159.40px;height:14px;line-height:14px;font-size:11px;color:#7a7a7a;font-family:'Liberation Sans', sans-serif;transform:scaleX(0.8813);-webkit-text-stroke:0.2px #7a7a7a;">Threaded Text</span>
<svg class="r" style="left:398.20px;top:162.90px;" width="4.2" height="6.2" viewBox="0 0 4.2 6.2"><path d="M0.6 0.4 L3.5 3.1 L0.6 5.8" fill="none" stroke="#a8a8a8" stroke-width="1.0"/></svg>
<div class="r" style="left:190.50px;top:175.50px;width:218.00px;height:1.00px;background:#dcdcdc;"></div>
<span class="t" style="left:193.00px;top:179.40px;height:14px;line-height:14px;font-size:11px;color:#7a7a7a;font-family:'Liberation Sans', sans-serif;transform:scaleX(0.9028);-webkit-text-stroke:0.2px #7a7a7a;">Fit Headline</span>
<span class="t" style="left:193.00px;top:195.40px;height:14px;line-height:14px;font-size:11px;color:#7a7a7a;font-family:'Liberation Sans', sans-serif;transform:scaleX(0.8454);-webkit-text-stroke:0.2px #7a7a7a;">Resolve Missing Fonts...</span>
<span class="t" style="left:193.00px;top:211.40px;height:14px;line-height:14px;font-size:11px;color:#111111;font-family:'Liberation Sans', sans-serif;transform:scaleX(0.8321);-webkit-text-stroke:0.2px #111111;">Find Font...</span>
<span class="t" style="left:193.00px;top:227.40px;height:14px;line-height:14px;font-size:11px;color:#111111;font-family:'Liberation Sans', sans-serif;transform:scaleX(0.8323);-webkit-text-stroke:0.2px #111111;">Change Case</span>
<svg class="r" style="left:398.20px;top:230.90px;" width="4.2" height="6.2" viewBox="0 0 4.2 6.2"><path d="M0.6 0.4 L3.5 3.1 L0.6 5.8" fill="none" stroke="#444444" stroke-width="1.5"/></svg>
<span class="t" style="left:193.00px;top:243.40px;height:14px;line-height:14px;font-size:11px;color:#111111;font-family:'Liberation Sans', sans-serif;transform:scaleX(0.8608);-webkit-text-stroke:0.2px #111111;">Smart Punctuation...</span>
<span class="t" style="left:193.00px;top:259.40px;height:14px;line-height:14px;font-size:11px;color:#111111;font-family:'Liberation Sans', sans-serif;transform:scaleX(0.8739);-webkit-text-stroke:0.2px #111111;">Create Outlines</span>
<span class="t" style="left:340.00px;top:259.40px;height:14px;line-height:14px;font-size:11px;color:#111111;font-family:'Liberation Sans', sans-serif;transform:scaleX(0.9169);-webkit-text-stroke:0.2px #111111;">Shift+Ctrl+O</span>
<span class="t" style="left:193.00px;top:275.40px;height:14px;line-height:14px;font-size:11px;color:#111111;font-family:'Liberation Sans', sans-serif;transform:scaleX(0.9282);-webkit-text-stroke:0.2px #111111;">Optical Margin Alignment</span>
<div class="r" style="left:190.50px;top:291.50px;width:218.00px;height:1.00px;background:#dcdcdc;"></div>
<span class="t" style="left:193.00px;top:295.40px;height:14px;line-height:14px;font-size:11px;color:#111111;font-family:'Liberation Sans', sans-serif;transform:scaleX(0.8678);-webkit-text-stroke:0.2px #111111;">Insert Special Character</span>
<svg class="r" style="left:398.20px;top:298.90px;" width="4.2" height="6.2" viewBox="0 0 4.2 6.2"><path d="M0.6 0.4 L3.5 3.1 L0.6 5.8" fill="none" stroke="#444444" stroke-width="1.5"/></svg>
<span class="t" style="left:193.00px;top:311.40px;height:14px;line-height:14px;font-size:11px;color:#111111;font-family:'Liberation Sans', sans-serif;transform:scaleX(0.8681);-webkit-text-stroke:0.2px #111111;">Insert WhiteSpace Character</span>
<svg class="r" style="left:398.20px;top:314.90px;" width="4.2" height="6.2" viewBox="0 0 4.2 6.2"><path d="M0.6 0.4 L3.5 3.1 L0.6 5.8" fill="none" stroke="#444444" stroke-width="1.5"/></svg>
<span class="t" style="left:193.00px;top:327.40px;height:14px;line-height:14px;font-size:11px;color:#111111;font-family:'Liberation Sans', sans-serif;transform:scaleX(0.8585);-webkit-text-stroke:0.2px #111111;">Insert Break Character</span>
<svg class="r" style="left:398.20px;top:330.90px;" width="4.2" height="6.2" viewBox="0 0 4.2 6.2"><path d="M0.6 0.4 L3.5 3.1 L0.6 5.8" fill="none" stroke="#444444" stroke-width="1.5"/></svg>
<span class="t" style="left:193.00px;top:343.40px;height:14px;line-height:14px;font-size:11px;color:#111111;font-family:'Liberation Sans', sans-serif;transform:scaleX(0.8975);-webkit-text-stroke:0.2px #111111;">Fill With PlaceHolder Text</span>
<div class="r" style="left:190.50px;top:359.50px;width:218.00px;height:1.00px;background:#dcdcdc;"></div>
<span class="t" style="left:193.00px;top:363.40px;height:14px;line-height:14px;font-size:11px;color:#111111;font-family:'Liberation Sans', sans-serif;transform:scaleX(0.8725);-webkit-text-stroke:0.2px #111111;">Show Hidden Characters</span>
<span class="t" style="left:352.00px;top:363.40px;height:14px;line-height:14px;font-size:11px;color:#111111;font-family:'Liberation Sans', sans-serif;transform:scaleX(0.9486);-webkit-text-stroke:0.2px #111111;">Alt+Ctrl+I</span>
<span class="t" style="left:193.00px;top:379.40px;height:14px;line-height:14px;font-size:11px;color:#111111;font-family:'Liberation Sans', sans-serif;transform:scaleX(0.9007);-webkit-text-stroke:0.2px #111111;">Type Orientation</span>
<svg class="r" style="left:398.20px;top:382.90px;" width="4.2" height="6.2" viewBox="0 0 4.2 6.2"><path d="M0.6 0.4 L3.5 3.1 L0.6 5.8" fill="none" stroke="#444444" stroke-width="1.5"/></svg>
<div class="r" style="left:190.50px;top:395.50px;width:218.00px;height:1.00px;background:#dcdcdc;"></div>
<span class="t" style="left:193.00px;top:400.20px;height:14px;line-height:14px;font-size:11px;color:#7a7a7a;font-family:'Liberation Sans', sans-serif;transform:scaleX(0.8630);-webkit-text-stroke:0.2px #7a7a7a;">Legacy Text</span>
<svg class="r" style="left:398.20px;top:403.70px;" width="4.2" height="6.2" viewBox="0 0 4.2 6.2"><path d="M0.6 0.4 L3.5 3.1 L0.6 5.8" fill="none" stroke="#a8a8a8" stroke-width="1.0"/></svg>
<svg class="r" style="left:231.60px;top:265.00px;" width="9.4" height="15" viewBox="0 0 10 16"><path d="M1 1 L1 12.6 L3.7 10.2 L5.7 14.8 L7.6 14 L5.6 9.5 L9 9.3 Z" fill="#fff" stroke="#000" stroke-width="0.9" stroke-linejoin="miter"/></svg>
<svg class="r" style="left:400.00px;top:256.00px;" width="90" height="22" viewBox="0 0 90 22"><path d="M2.4 11 L18 3 L18 9.1 L82.9 9.1 L82.9 12.8 L18 12.8 L18 19 Z" fill="#fb0000"/></svg>
</body></html>
